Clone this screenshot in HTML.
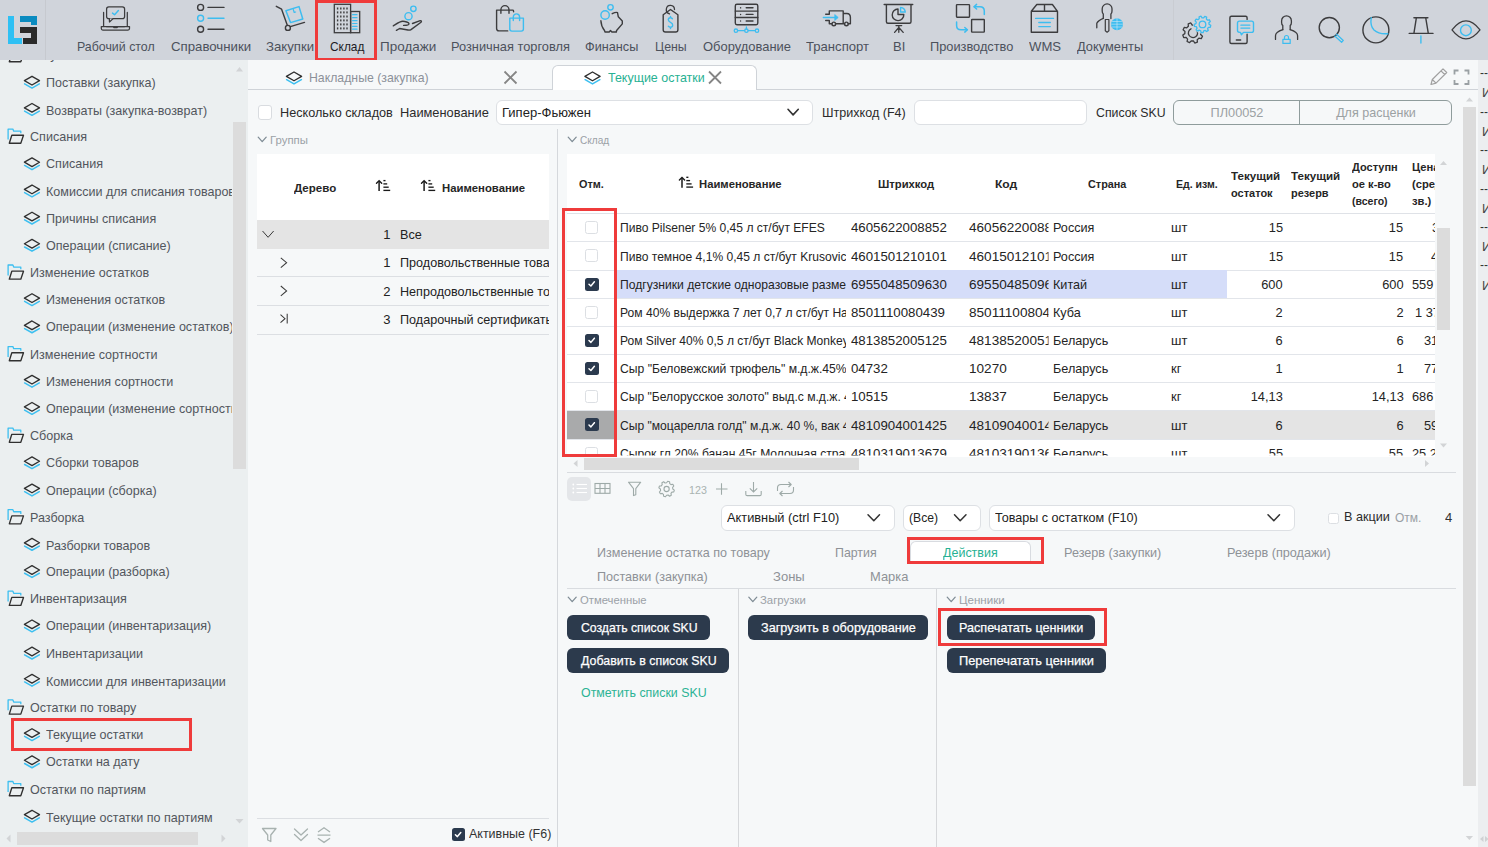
<!DOCTYPE html>
<html><head><meta charset="utf-8"><style>
html,body{margin:0;padding:0;width:1488px;height:847px;overflow:hidden;background:#f6f8f9;font-family:"Liberation Sans",sans-serif;}
.a{position:absolute;box-sizing:border-box;}
.t{position:absolute;white-space:nowrap;}
.clip{position:absolute;overflow:hidden;}
</style></head><body>
<div class="a" style="left:0.00px;top:0.00px;width:1488.00px;height:60.00px;background:#d0d4db"></div>
<div class="a" style="left:45.00px;top:0.00px;width:1.00px;height:60.00px;background:#c6c9cf"></div>
<div class="a" style="left:1173.00px;top:0.00px;width:1.00px;height:60.00px;background:#c9ccd2"></div>
<div class="a" style="left:8.00px;top:16.00px;width:6.00px;height:28.00px;background:#2ec0f4"></div>
<div class="a" style="left:8.00px;top:38.00px;width:14.00px;height:6.00px;background:#2ec0f4"></div>
<div class="a" style="left:19.50px;top:16.00px;width:17.50px;height:6.00px;background:#0a8bc0"></div>
<div class="a" style="left:31.00px;top:16.00px;width:6.00px;height:9.00px;background:#0a8bc0"></div>
<div class="a" style="left:19.50px;top:27.30px;width:17.50px;height:5.50px;background:#2a2a2a"></div>
<div class="a" style="left:31.00px;top:27.30px;width:6.00px;height:16.70px;background:#2a2a2a"></div>
<div class="a" style="left:23.40px;top:38.40px;width:13.60px;height:5.60px;background:#2a2a2a"></div>
<svg class="a" style="left:0;top:0" width="1488" height="60" viewBox="0 0 1488 60" fill="none">
<g stroke-linecap="round" stroke-linejoin="round" stroke-width="1.25">
<!-- desktop -->
<rect x="106.6" y="6.8" width="18" height="11.8" rx="2.2" stroke="#3c3c3e"/>
<path d="M109.3 18.6 L109.5 22 L113.1 18.6" stroke="#3c3c3e" fill="#d0d4db"/>
<path d="M112.5 13.1 L114.6 14.7 L118.4 10.5" stroke="#3dbdf0" stroke-width="1.4"/>
<path d="M103.6 12.4 V26.3 M127.3 12.4 V26.3" stroke="#3c3c3e"/>
<path d="M101.3 26.5 H129.5 V28.5 Q129.5 30 128 30 H102.8 Q101.3 30 101.3 28.5 Z" stroke="#3c3c3e"/>
<path d="M106.5 26.5 H113 L114 27.6 H117 L118 26.5 H124.5" stroke="#3c3c3e"/>
<!-- list -->
<circle cx="200.6" cy="7.4" r="3" stroke="#3c3c3e" stroke-width="1.4"/>
<circle cx="200.6" cy="18.3" r="3" stroke="#3dbdf0" stroke-width="1.4"/>
<circle cx="200.6" cy="29.2" r="3" stroke="#3c3c3e" stroke-width="1.4"/>
<path d="M208 7.4 H224 M208 29.2 H224" stroke="#3c3c3e" stroke-width="1.4"/>
<path d="M208 18.3 H224" stroke="#3dbdf0" stroke-width="1.4"/>
<!-- cart -->
<path d="M276.3 6.3 L281.6 9.2 L287.3 25.2" stroke="#3c3c3e" stroke-width="1.4"/>
<circle cx="287.9" cy="27.9" r="2.5" stroke="#3c3c3e" stroke-width="1.4"/>
<path d="M290.3 26.6 L304.5 22.4" stroke="#3c3c3e" stroke-width="1.4"/>
<path d="M285.9 10.8 L299 6.6 L302.8 19 L290.5 22.6 Z" stroke="#3dbdf0" stroke-width="1.5"/>
<path d="M293.3 9.5 L294.2 12.5 L295.6 12" stroke="#3dbdf0" stroke-width="1.2"/>
<!-- building -->
<rect x="334.3" y="4.3" width="16.3" height="28.4" stroke="#3c3c3e" stroke-width="1.3" stroke-linejoin="miter"/>
<rect x="350.6" y="11.5" width="9.1" height="21.2" stroke="#3c3c3e" stroke-width="1.3" stroke-linejoin="miter"/>
<rect x="336.9" y="7.5" width="1.4" height="2" fill="#3c3c3e" stroke="none"/><rect x="336.9" y="11.4" width="1.4" height="2" fill="#3c3c3e" stroke="none"/><rect x="336.9" y="15.5" width="1.4" height="2" fill="#3c3c3e" stroke="none"/><rect x="336.9" y="19.4" width="1.4" height="2" fill="#3c3c3e" stroke="none"/><rect x="336.9" y="23.4" width="1.4" height="2" fill="#3c3c3e" stroke="none"/><rect x="336.9" y="27.4" width="1.4" height="2" fill="#3c3c3e" stroke="none"/><rect x="340.1" y="7.5" width="1.4" height="2" fill="#3c3c3e" stroke="none"/><rect x="340.1" y="11.4" width="1.4" height="2" fill="#3c3c3e" stroke="none"/><rect x="340.1" y="15.5" width="1.4" height="2" fill="#3c3c3e" stroke="none"/><rect x="340.1" y="19.4" width="1.4" height="2" fill="#3c3c3e" stroke="none"/><rect x="340.1" y="23.4" width="1.4" height="2" fill="#3c3c3e" stroke="none"/><rect x="340.1" y="27.4" width="1.4" height="2" fill="#3c3c3e" stroke="none"/><rect x="343.2" y="7.5" width="1.4" height="2" fill="#3c3c3e" stroke="none"/><rect x="343.2" y="11.4" width="1.4" height="2" fill="#3c3c3e" stroke="none"/><rect x="343.2" y="15.5" width="1.4" height="2" fill="#3c3c3e" stroke="none"/><rect x="343.2" y="19.4" width="1.4" height="2" fill="#3c3c3e" stroke="none"/><rect x="343.2" y="23.4" width="1.4" height="2" fill="#3c3c3e" stroke="none"/><rect x="343.2" y="27.4" width="1.4" height="2" fill="#3c3c3e" stroke="none"/><rect x="346.3" y="7.5" width="1.4" height="2" fill="#3c3c3e" stroke="none"/><rect x="346.3" y="11.4" width="1.4" height="2" fill="#3c3c3e" stroke="none"/><rect x="346.3" y="15.5" width="1.4" height="2" fill="#3c3c3e" stroke="none"/><rect x="346.3" y="19.4" width="1.4" height="2" fill="#3c3c3e" stroke="none"/><rect x="346.3" y="23.4" width="1.4" height="2" fill="#3c3c3e" stroke="none"/><rect x="346.3" y="27.4" width="1.4" height="2" fill="#3c3c3e" stroke="none"/><path d="M352.6 14.7 H357" stroke="#3dbdf0" stroke-width="1.2"/><path d="M352.6 17.7 H357" stroke="#3dbdf0" stroke-width="1.2"/><path d="M352.6 20.6 H357" stroke="#3dbdf0" stroke-width="1.2"/><path d="M352.6 23.5 H357" stroke="#3dbdf0" stroke-width="1.2"/><path d="M352.6 26.4 H357" stroke="#3dbdf0" stroke-width="1.2"/><path d="M352.6 29.2 H357" stroke="#3dbdf0" stroke-width="1.2"/>
<!-- hand -->
<circle cx="408.5" cy="16.2" r="3.6" stroke="#3dbdf0" stroke-width="1.4"/>
<circle cx="413.4" cy="8.8" r="2.7" stroke="#3dbdf0" stroke-width="1.4"/>
<path d="M393.3 25.8 C397 23.5 400 21.3 402.8 21.3 C405 21.3 409 22.3 409 23.8 C409 25 406 25.4 403.6 25.4" stroke="#3c3c3e" stroke-width="1.4"/>
<path d="M412.5 23.5 L420.2 20.7 C421.4 20.5 421.8 21.3 421 22.2 L411 29.6 C410 30.2 409 30.2 408 30 L399.6 28.5 L396.4 30.3" stroke="#3c3c3e" stroke-width="1.4"/>
<!-- bags -->
<path d="M507.7 30.9 H499 Q496.6 30.9 496.6 28.5 V10.1 H513 Q513.6 10.1 513.6 11.8" stroke="#3c3c3e" stroke-width="1.4"/>
<path d="M500.9 13.3 V9.9 A4.05 4.3 0 0 1 509 9.9 V13.3" stroke="#3c3c3e" stroke-width="1.4"/>
<path d="M509.8 18.1 H523.4 V29 Q523.4 31.1 521.3 31.1 H511.9 Q509.8 31.1 509.8 29 Z" stroke="#3dbdf0" stroke-width="1.4"/>
<path d="M513.3 20.5 V17.1 A3.15 3.2 0 0 1 519.6 17.1 V20.5" stroke="#3dbdf0" stroke-width="1.4"/>
<!-- piggy -->
<circle cx="605.1" cy="15" r="4.2" stroke="#3dbdf0" stroke-width="1.4"/>
<circle cx="610.5" cy="7.3" r="2.7" stroke="#3dbdf0" stroke-width="1.4"/>
<path d="M600.9 20.8 C601 25 602.5 28 604.5 30.5 L605 32 H609.2 L610.5 30.6 L611.9 32 H616.3 L616.6 30.5 L622.3 23.9 V21 L618.3 16.8 L617.5 12.6 C616.5 12 615 12.3 612.2 13.7" stroke="#3c3c3e" stroke-width="1.4"/>
<!-- tag -->
<path d="M670.5 9.5 L677.9 14.8 V29.8 Q677.9 32 675.7 32 H665.4 Q663.2 32 663.2 29.8 V14.8 Z" stroke="#3c3c3e" stroke-width="1.4"/>
<path d="M674.5 9.5 A4.1 4.3 0 1 0 669.5 13.8" stroke="#3c3c3e" stroke-width="1.3"/>
<path d="M672.4 18.7 Q671.5 17.6 670.3 17.7 Q668.3 17.9 668.3 19.8 Q668.4 21.5 670.5 22.3 Q672.8 23.2 672.7 25.2 Q672.5 27.2 670.4 27.2 Q669 27.2 668.3 26.2 M670.5 16.5 V17.7 M670.5 27.2 V28.5" stroke="#3dbdf0" stroke-width="1.4"/>
<!-- server -->
<rect x="735.3" y="4.3" width="22.5" height="20.4" rx="1.6" stroke="#3c3c3e" stroke-width="1.4"/>
<path d="M735.3 11.1 H757.8 M735.3 17.5 H757.8" stroke="#3c3c3e" stroke-width="1.4"/>
<path d="M740.6 7.8 V7.9 M740.6 14.4 V14.5 M740.6 21 V21.1" stroke="#3c3c3e" stroke-width="1.4"/>
<path d="M746.2 7.8 H753 M746.2 14.4 H753 M746.2 21 H753" stroke="#3c3c3e" stroke-width="1.4"/>
<path d="M737.7 30.7 H744.6 M748.2 30.7 H755.2 M746.4 27 V28.9" stroke="#3dbdf0" stroke-width="1.3"/>
<circle cx="735.9" cy="30.7" r="1.7" stroke="#3dbdf0" stroke-width="1.3"/>
<circle cx="746.4" cy="30.7" r="1.7" stroke="#3dbdf0" stroke-width="1.3"/>
<circle cx="757" cy="30.7" r="1.7" stroke="#3dbdf0" stroke-width="1.3"/>
<!-- truck -->
<path d="M825.7 14.3 H829.3 V10.9 H843.2 V23.7 M825.7 20.5 H829.3 V23.7 H832 M835.6 23.7 H844.6 M848.2 23.7 H850.4 V17.6 Q850.4 13.5 846.8 13.5 H843.2" stroke="#3c3c3e" stroke-width="1.4"/>
<circle cx="833.8" cy="23.9" r="1.8" stroke="#3c3c3e" stroke-width="1.4"/>
<circle cx="846.4" cy="23.9" r="1.8" stroke="#3c3c3e" stroke-width="1.4"/>
<path d="M823.4 17.5 H836" stroke="#3dbdf0" stroke-width="1.6"/>
<path d="M835 14.8 L838.2 17.5 L835 20.2 Z" fill="#3dbdf0" stroke="#3dbdf0" stroke-width="0.8"/>
<!-- BI -->
<path d="M884.2 4.6 H912.7" stroke="#3c3c3e" stroke-width="1.5"/>
<path d="M886.4 4.6 V21.8 Q886.4 23.3 887.9 23.3 H909.5 Q911 23.3 911 21.8 V4.6" stroke="#3c3c3e" stroke-width="1.4"/>
<path d="M898 9 A5.8 5.8 0 1 0 903.8 14.5 H898 Z" stroke="#3c3c3e" stroke-width="1.4"/>
<path d="M900.6 7.4 A5.3 5.3 0 0 1 905.3 12 H900.6 Z" stroke="#3dbdf0" stroke-width="1.4"/>
<path d="M896 25.6 H901.7 M898.8 25.6 V32.3 M898.8 27.5 L894.6 32.4 M898.8 27.5 L903.2 32.4" stroke="#3c3c3e" stroke-width="1.3"/>
<!-- production -->
<rect x="956.5" y="4.6" width="13" height="12.6" rx="0.6" stroke="#3c3c3e" stroke-width="1.4"/>
<rect x="971.6" y="19.5" width="12.7" height="12.6" rx="0.6" stroke="#3c3c3e" stroke-width="1.4"/>
<path d="M984.3 14.4 V11 Q984.3 6.7 980 6.7 H974.3" stroke="#3dbdf0" stroke-width="1.5"/>
<path d="M976.6 4.4 L974 6.7 L976.6 9" stroke="#3dbdf0" stroke-width="1.5"/>
<path d="M956.6 22.1 V25.5 Q956.6 29.8 960.9 29.8 H967" stroke="#3dbdf0" stroke-width="1.5"/>
<path d="M964.8 27.5 L967.4 29.8 L964.8 32.1" stroke="#3dbdf0" stroke-width="1.5"/>
<!-- WMS -->
<path d="M1031.3 11.3 V32.2 H1057.5 V11.3 Z M1031.3 11.3 L1036.8 4.5 H1052.4 L1057.5 11.3 M1044.5 4.5 V11.3" stroke="#3c3c3e" stroke-width="1.4"/>
<path d="M1035.6 18.4 H1053.5 M1038.8 22.5 H1050.3 M1038.8 26.6 H1050.3" stroke="#3dbdf0" stroke-width="1.4"/>
<!-- documents -->
<path d="M1103.3 18.3 V14 Q1102.2 13.2 1102.2 11 V8.8 A4.9 4.9 0 0 1 1112 8.8 V11 Q1112 13.2 1110.9 14 V18.5" stroke="#3c3c3e" stroke-width="1.3"/>
<path d="M1103.3 18.3 Q1098 20.5 1096.8 23.3 V27.8" stroke="#3c3c3e" stroke-width="1.3"/>
<path d="M1105.3 19.5 H1108.9 V30.8 L1107.1 32.2 L1105.3 30.8 Z" stroke="#3c3c3e" stroke-width="1.2"/>
<circle cx="1117" cy="24.2" r="6" fill="#3dbdf0" stroke="none"/>
<path d="M1111.5 24.2 H1122.5 M1117 18.5 V30 M1112.5 21.5 H1121.5 M1112.5 27 H1121.5" stroke="#d0e8f5" stroke-width="0.6"/>
<!-- right: gears -->
<polygon points="1200.64,34.59 1202.49,36.19 1201.26,38.70 1198.86,38.22 1197.22,39.67 1197.40,42.11 1194.75,43.01 1193.40,40.98 1191.21,40.84 1189.61,42.69 1187.10,41.46 1187.58,39.06 1186.13,37.42 1183.69,37.60 1182.79,34.95 1184.82,33.60 1184.96,31.41 1183.11,29.81 1184.34,27.30 1186.74,27.78 1188.38,26.33 1188.20,23.89 1190.85,22.99 1192.20,25.02 1194.39,25.16 1195.99,23.31 1198.50,24.54 1198.02,26.94 1199.47,28.58 1201.91,28.40 1202.81,31.05 1200.78,32.40" stroke="#3c3c3e" stroke-width="1.3"/><path d="M1196.5 30 A4.6 4.6 0 1 1 1191 28.8" stroke="#3c3c3e" stroke-width="1.3"/><circle cx="1202.5" cy="24.4" r="9.5" fill="#d0d4db" stroke="none"/><polygon points="1209.10,24.40 1210.75,25.27 1210.30,27.24 1208.43,27.29 1207.56,28.64 1208.27,30.37 1206.65,31.59 1205.18,30.43 1203.65,30.90 1203.08,32.68 1201.06,32.57 1200.68,30.74 1199.20,30.12 1197.62,31.11 1196.14,29.74 1197.03,28.09 1196.30,26.66 1194.45,26.41 1194.20,24.40 1195.94,23.71 1196.30,22.14 1195.04,20.76 1196.14,19.06 1197.92,19.65 1199.20,18.68 1199.12,16.82 1201.06,16.23 1202.04,17.82 1203.65,17.90 1204.79,16.42 1206.65,17.21 1206.38,19.06 1207.56,20.16 1209.38,19.76 1210.30,21.56 1208.90,22.80" stroke="#3dbdf0" stroke-width="1.3" fill="#d0d4db"/><circle cx="1202.5" cy="24.4" r="3.3" stroke="#3dbdf0" stroke-width="1.3"/>
<!-- phone -->
<path d="M1247.1 19.4 V17.8 Q1247.1 16.3 1245.6 16.3 H1231.4 Q1229.9 16.3 1229.9 17.8 V42 Q1229.9 43.5 1231.4 43.5 H1245.6 Q1247.1 43.5 1247.1 42 V34.2" stroke="#3c3c3e" stroke-width="1.4"/>
<path d="M1236.4 40 H1240.6" stroke="#3c3c3e" stroke-width="1.5"/>
<path d="M1239.5 21.1 H1251.5 Q1253.5 21.1 1253.5 23.1 V30.4 Q1253.5 32.4 1251.5 32.4 H1243.5 L1241.4 34.8 L1240.5 32.4 Q1237.5 32.4 1237.5 30.4 V23.1 Q1237.5 21.1 1239.5 21.1 Z" stroke="#3dbdf0" stroke-width="1.4" fill="#d0d4db"/>
<path d="M1240.9 25.2 H1249.8 M1240.9 28.1 H1249.8" stroke="#3dbdf0" stroke-width="1.3"/>
<!-- user -->
<path d="M1282.8 29.7 V25.6 Q1281.6 24.6 1281.6 22.5 V20.9 A4.9 5.1 0 0 1 1291.4 20.9 V22.5 Q1291.4 24.6 1290.2 25.6 V29.7" stroke="#3c3c3e" stroke-width="1.3"/>
<path d="M1282.8 29.7 Q1275.5 32 1275.5 35.7 V39.4 M1290.2 29.7 Q1297.6 32 1297.6 35.7 V39.4" stroke="#3c3c3e" stroke-width="1.3"/>
<rect x="1282.9" y="39.3" width="7.3" height="4.1" stroke="#3dbdf0" stroke-width="1.2"/>
<path d="M1284.5 39.3 V37.5 A2 2 0 0 1 1288.5 37.5 V39.3" stroke="#3dbdf0" stroke-width="1.2"/>
<!-- search -->
<circle cx="1329.3" cy="27.6" r="10.1" stroke="#3c3c3e" stroke-width="1.4"/>
<path d="M1336.6 34.3 L1343.3 40.4 L1341.6 42.2 L1334.8 36" stroke="#3dbdf0" stroke-width="1.3"/>
<!-- moon -->
<circle cx="1375.9" cy="29.9" r="13" stroke="#3c3c3e" stroke-width="1.4"/>
<path d="M1371.2 17.6 Q1370 26 1374 30 Q1379 34.5 1387.8 33.7" stroke="#3dbdf0" stroke-width="1.4"/>
<!-- pin -->
<path d="M1413.9 17.7 H1427.9 M1416.4 17.7 L1413.9 33.4 M1425.7 17.7 L1428.3 33.4 M1409.2 33.4 H1433" stroke="#3c3c3e" stroke-width="1.4"/>
<path d="M1420.9 36 V43" stroke="#3dbdf0" stroke-width="1.4"/>
<!-- eye -->
<path d="M1452 29.9 Q1466 12 1480 29.9 Q1466 48 1452 29.9 Z" stroke="#3c3c3e" stroke-width="1.3"/>
<circle cx="1465.9" cy="30.3" r="5.4" stroke="#3dbdf0" stroke-width="1.4"/>
</g>
</svg>
<span id="t1" class="t" style="left:77.00px;top:38.82px;font-size:13.5px;line-height:16.20px;color:#4c515b;font-weight:normal;transform:scaleX(0.9165);transform-origin:0 0;">Рабочий стол</span>
<span id="t2" class="t" style="left:171.00px;top:38.82px;font-size:13.5px;line-height:16.20px;color:#4c515b;font-weight:normal;transform:scaleX(0.9794);transform-origin:0 0;">Справочники</span>
<span id="t3" class="t" style="left:266.00px;top:38.82px;font-size:13.5px;line-height:16.20px;color:#4c515b;font-weight:normal;transform:scaleX(0.9772);transform-origin:0 0;">Закупки</span>
<span id="t4" class="t" style="left:330.00px;top:38.82px;font-size:13.5px;line-height:16.20px;color:#1b1b24;font-weight:normal;transform:scaleX(0.8788);transform-origin:0 0;">Склад</span>
<span id="t5" class="t" style="left:380.00px;top:38.82px;font-size:13.5px;line-height:16.20px;color:#4c515b;font-weight:normal;transform:scaleX(0.9981);transform-origin:0 0;">Продажи</span>
<span id="t6" class="t" style="left:451.00px;top:38.82px;font-size:13.5px;line-height:16.20px;color:#4c515b;font-weight:normal;transform:scaleX(0.9494);transform-origin:0 0;">Розничная торговля</span>
<span id="t7" class="t" style="left:585.00px;top:38.82px;font-size:13.5px;line-height:16.20px;color:#4c515b;font-weight:normal;transform:scaleX(0.9407);transform-origin:0 0;">Финансы</span>
<span id="t8" class="t" style="left:654.90px;top:38.82px;font-size:13.5px;line-height:16.20px;color:#4c515b;font-weight:normal;transform:scaleX(0.9139);transform-origin:0 0;">Цены</span>
<span id="t9" class="t" style="left:703.00px;top:38.82px;font-size:13.5px;line-height:16.20px;color:#4c515b;font-weight:normal;transform:scaleX(0.9580);transform-origin:0 0;">Оборудование</span>
<span id="t10" class="t" style="left:806.00px;top:38.82px;font-size:13.5px;line-height:16.20px;color:#4c515b;font-weight:normal;transform:scaleX(0.9711);transform-origin:0 0;">Транспорт</span>
<span id="t11" class="t" style="left:892.60px;top:38.82px;font-size:13.5px;line-height:16.20px;color:#4c515b;font-weight:normal;transform:scaleX(0.9633);transform-origin:0 0;">BI</span>
<span id="t12" class="t" style="left:929.50px;top:38.82px;font-size:13.5px;line-height:16.20px;color:#4c515b;font-weight:normal;transform:scaleX(0.9473);transform-origin:0 0;">Производство</span>
<span id="t13" class="t" style="left:1029.00px;top:38.82px;font-size:13.5px;line-height:16.20px;color:#4c515b;font-weight:normal;transform:scaleX(0.9730);transform-origin:0 0;">WMS</span>
<span id="t14" class="t" style="left:1076.70px;top:38.82px;font-size:13.5px;line-height:16.20px;color:#4c515b;font-weight:normal;transform:scaleX(0.9515);transform-origin:0 0;">Документы</span>
<div class="a" style="left:315.00px;top:0.00px;width:62.00px;height:61.00px;border:3px solid #ef3b3b"></div>
<div class="a" style="left:0.00px;top:60.00px;width:248.00px;height:787.00px;background:#ebeff0"></div>
<div class="a" style="left:0;top:0;width:1488px;height:847px;clip-path:inset(60.00px 1256.00px 17.00px 0.00px)">
<span id="t15" class="t" style="left:29.80px;top:47.22px;font-size:13.5px;line-height:16.20px;color:#52565d;font-weight:normal;transform:scaleX(0.9289);transform-origin:0 0;">Закупки</span>
<span id="t16" class="t" style="left:45.90px;top:75.32px;font-size:13.5px;line-height:16.20px;color:#52565d;font-weight:normal;transform:scaleX(0.9265);transform-origin:0 0;">Поставки (закупка)</span>
<span id="t17" class="t" style="left:45.90px;top:102.52px;font-size:13.5px;line-height:16.20px;color:#52565d;font-weight:normal;transform:scaleX(0.9271);transform-origin:0 0;">Возвраты (закупка-возврат)</span>
<span id="t18" class="t" style="left:29.80px;top:128.82px;font-size:13.5px;line-height:16.20px;color:#52565d;font-weight:normal;transform:scaleX(0.9315);transform-origin:0 0;">Списания</span>
<span id="t19" class="t" style="left:45.90px;top:156.02px;font-size:13.5px;line-height:16.20px;color:#52565d;font-weight:normal;transform:scaleX(0.9315);transform-origin:0 0;">Списания</span>
<span id="t20" class="t" style="left:45.90px;top:183.62px;font-size:13.5px;line-height:16.20px;color:#52565d;font-weight:normal;transform:scaleX(0.9288);transform-origin:0 0;">Комиссии для списания товаров</span>
<span id="t21" class="t" style="left:45.90px;top:211.22px;font-size:13.5px;line-height:16.20px;color:#52565d;font-weight:normal;transform:scaleX(0.9306);transform-origin:0 0;">Причины списания</span>
<span id="t22" class="t" style="left:45.90px;top:238.42px;font-size:13.5px;line-height:16.20px;color:#52565d;font-weight:normal;transform:scaleX(0.9290);transform-origin:0 0;">Операции (списание)</span>
<span id="t23" class="t" style="left:29.80px;top:264.72px;font-size:13.5px;line-height:16.20px;color:#52565d;font-weight:normal;transform:scaleX(0.9293);transform-origin:0 0;">Изменение остатков</span>
<span id="t24" class="t" style="left:45.90px;top:292.42px;font-size:13.5px;line-height:16.20px;color:#52565d;font-weight:normal;transform:scaleX(0.9293);transform-origin:0 0;">Изменения остатков</span>
<span id="t25" class="t" style="left:45.90px;top:319.12px;font-size:13.5px;line-height:16.20px;color:#52565d;font-weight:normal;transform:scaleX(0.9285);transform-origin:0 0;">Операции (изменение остатков)</span>
<span id="t26" class="t" style="left:29.80px;top:346.82px;font-size:13.5px;line-height:16.20px;color:#52565d;font-weight:normal;transform:scaleX(0.9297);transform-origin:0 0;">Изменение сортности</span>
<span id="t27" class="t" style="left:45.90px;top:374.42px;font-size:13.5px;line-height:16.20px;color:#52565d;font-weight:normal;transform:scaleX(0.9297);transform-origin:0 0;">Изменения сортности</span>
<span id="t28" class="t" style="left:45.90px;top:400.82px;font-size:13.5px;line-height:16.20px;color:#52565d;font-weight:normal;transform:scaleX(0.9289);transform-origin:0 0;">Операции (изменение сортности)</span>
<span id="t29" class="t" style="left:29.80px;top:427.82px;font-size:13.5px;line-height:16.20px;color:#52565d;font-weight:normal;transform:scaleX(0.9317);transform-origin:0 0;">Сборка</span>
<span id="t30" class="t" style="left:45.90px;top:455.02px;font-size:13.5px;line-height:16.20px;color:#52565d;font-weight:normal;transform:scaleX(0.9293);transform-origin:0 0;">Сборки товаров</span>
<span id="t31" class="t" style="left:45.90px;top:482.72px;font-size:13.5px;line-height:16.20px;color:#52565d;font-weight:normal;transform:scaleX(0.9288);transform-origin:0 0;">Операции (сборка)</span>
<span id="t32" class="t" style="left:29.80px;top:510.42px;font-size:13.5px;line-height:16.20px;color:#52565d;font-weight:normal;transform:scaleX(0.9299);transform-origin:0 0;">Разборка</span>
<span id="t33" class="t" style="left:45.90px;top:537.62px;font-size:13.5px;line-height:16.20px;color:#52565d;font-weight:normal;transform:scaleX(0.9288);transform-origin:0 0;">Разборки товаров</span>
<span id="t34" class="t" style="left:45.90px;top:563.72px;font-size:13.5px;line-height:16.20px;color:#52565d;font-weight:normal;transform:scaleX(0.9287);transform-origin:0 0;">Операции (разборка)</span>
<span id="t35" class="t" style="left:29.80px;top:590.92px;font-size:13.5px;line-height:16.20px;color:#52565d;font-weight:normal;transform:scaleX(0.9307);transform-origin:0 0;">Инвентаризация</span>
<span id="t36" class="t" style="left:45.90px;top:618.12px;font-size:13.5px;line-height:16.20px;color:#52565d;font-weight:normal;transform:scaleX(0.9292);transform-origin:0 0;">Операции (инвентаризация)</span>
<span id="t37" class="t" style="left:45.90px;top:646.32px;font-size:13.5px;line-height:16.20px;color:#52565d;font-weight:normal;transform:scaleX(0.9308);transform-origin:0 0;">Инвентаризации</span>
<span id="t38" class="t" style="left:45.90px;top:673.52px;font-size:13.5px;line-height:16.20px;color:#52565d;font-weight:normal;transform:scaleX(0.9294);transform-origin:0 0;">Комиссии для инвентаризации</span>
<span id="t39" class="t" style="left:29.80px;top:699.82px;font-size:13.5px;line-height:16.20px;color:#52565d;font-weight:normal;transform:scaleX(0.9273);transform-origin:0 0;">Остатки по товару</span>
<span id="t40" class="t" style="left:45.90px;top:727.02px;font-size:13.5px;line-height:16.20px;color:#52565d;font-weight:normal;transform:scaleX(0.9288);transform-origin:0 0;">Текущие остатки</span>
<span id="t41" class="t" style="left:45.90px;top:754.22px;font-size:13.5px;line-height:16.20px;color:#52565d;font-weight:normal;transform:scaleX(0.9273);transform-origin:0 0;">Остатки на дату</span>
<span id="t42" class="t" style="left:29.80px;top:782.42px;font-size:13.5px;line-height:16.20px;color:#52565d;font-weight:normal;transform:scaleX(0.9284);transform-origin:0 0;">Остатки по партиям</span>
<span id="t43" class="t" style="left:45.90px;top:809.62px;font-size:13.5px;line-height:16.20px;color:#52565d;font-weight:normal;transform:scaleX(0.9282);transform-origin:0 0;">Текущие остатки по партиям</span>
<svg class="a" style="left:0;top:0" width="248" height="847" viewBox="0 0 248 847" fill="none"><path d="M8.1 57.91 V47.52 H12.9 L13.7 49.61 H20.8 V51.81" stroke="#3cbff0" stroke-width="1.3" stroke-linejoin="round"/><path d="M11.8 53.71 H23.5 L20.8 61.71 H9.3 Z" stroke="#303030" stroke-width="1.35" stroke-linejoin="round" fill="#ebeff0"/><path d="M24.4 80.65 L32 76.30 L39.5 80.65 L32 85.00 Z" stroke="#303030" stroke-width="1.35" stroke-linejoin="round"/><path d="M24.6 83.90 L32 88.10 L39.3 83.90" stroke="#3cbff0" stroke-width="1.5" stroke-linejoin="round" stroke-linecap="round"/><path d="M24.4 107.84 L32 103.48 L39.5 107.84 L32 112.19 Z" stroke="#303030" stroke-width="1.35" stroke-linejoin="round"/><path d="M24.6 111.09 L32 115.28 L39.3 111.09" stroke="#3cbff0" stroke-width="1.5" stroke-linejoin="round" stroke-linecap="round"/><path d="M8.1 139.47 V129.07 H12.9 L13.7 131.17 H20.8 V133.37" stroke="#3cbff0" stroke-width="1.3" stroke-linejoin="round"/><path d="M11.8 135.27 H23.5 L20.8 143.27 H9.3 Z" stroke="#303030" stroke-width="1.35" stroke-linejoin="round" fill="#ebeff0"/><path d="M24.4 162.21 L32 157.86 L39.5 162.21 L32 166.56 Z" stroke="#303030" stroke-width="1.35" stroke-linejoin="round"/><path d="M24.6 165.46 L32 169.66 L39.3 165.46" stroke="#3cbff0" stroke-width="1.5" stroke-linejoin="round" stroke-linecap="round"/><path d="M24.4 189.39 L32 185.04 L39.5 189.39 L32 193.74 Z" stroke="#303030" stroke-width="1.35" stroke-linejoin="round"/><path d="M24.6 192.64 L32 196.84 L39.3 192.64" stroke="#3cbff0" stroke-width="1.5" stroke-linejoin="round" stroke-linecap="round"/><path d="M24.4 216.57 L32 212.22 L39.5 216.57 L32 220.92 Z" stroke="#303030" stroke-width="1.35" stroke-linejoin="round"/><path d="M24.6 219.82 L32 224.02 L39.3 219.82" stroke="#3cbff0" stroke-width="1.5" stroke-linejoin="round" stroke-linecap="round"/><path d="M24.4 243.76 L32 239.41 L39.5 243.76 L32 248.11 Z" stroke="#303030" stroke-width="1.35" stroke-linejoin="round"/><path d="M24.6 247.01 L32 251.21 L39.3 247.01" stroke="#3cbff0" stroke-width="1.5" stroke-linejoin="round" stroke-linecap="round"/><path d="M8.1 275.39 V264.99 H12.9 L13.7 267.09 H20.8 V269.29" stroke="#3cbff0" stroke-width="1.3" stroke-linejoin="round"/><path d="M11.8 271.19 H23.5 L20.8 279.19 H9.3 Z" stroke="#303030" stroke-width="1.35" stroke-linejoin="round" fill="#ebeff0"/><path d="M24.4 298.13 L32 293.78 L39.5 298.13 L32 302.48 Z" stroke="#303030" stroke-width="1.35" stroke-linejoin="round"/><path d="M24.6 301.38 L32 305.58 L39.3 301.38" stroke="#3cbff0" stroke-width="1.5" stroke-linejoin="round" stroke-linecap="round"/><path d="M24.4 325.31 L32 320.96 L39.5 325.31 L32 329.66 Z" stroke="#303030" stroke-width="1.35" stroke-linejoin="round"/><path d="M24.6 328.56 L32 332.76 L39.3 328.56" stroke="#3cbff0" stroke-width="1.5" stroke-linejoin="round" stroke-linecap="round"/><path d="M8.1 356.95 V346.55 H12.9 L13.7 348.65 H20.8 V350.85" stroke="#3cbff0" stroke-width="1.3" stroke-linejoin="round"/><path d="M11.8 352.75 H23.5 L20.8 360.75 H9.3 Z" stroke="#303030" stroke-width="1.35" stroke-linejoin="round" fill="#ebeff0"/><path d="M24.4 379.68 L32 375.33 L39.5 379.68 L32 384.03 Z" stroke="#303030" stroke-width="1.35" stroke-linejoin="round"/><path d="M24.6 382.93 L32 387.13 L39.3 382.93" stroke="#3cbff0" stroke-width="1.5" stroke-linejoin="round" stroke-linecap="round"/><path d="M24.4 406.87 L32 402.52 L39.5 406.87 L32 411.22 Z" stroke="#303030" stroke-width="1.35" stroke-linejoin="round"/><path d="M24.6 410.12 L32 414.32 L39.3 410.12" stroke="#3cbff0" stroke-width="1.5" stroke-linejoin="round" stroke-linecap="round"/><path d="M8.1 438.50 V428.10 H12.9 L13.7 430.20 H20.8 V432.40" stroke="#3cbff0" stroke-width="1.3" stroke-linejoin="round"/><path d="M11.8 434.30 H23.5 L20.8 442.30 H9.3 Z" stroke="#303030" stroke-width="1.35" stroke-linejoin="round" fill="#ebeff0"/><path d="M24.4 461.24 L32 456.89 L39.5 461.24 L32 465.59 Z" stroke="#303030" stroke-width="1.35" stroke-linejoin="round"/><path d="M24.6 464.49 L32 468.69 L39.3 464.49" stroke="#3cbff0" stroke-width="1.5" stroke-linejoin="round" stroke-linecap="round"/><path d="M24.4 488.42 L32 484.07 L39.5 488.42 L32 492.77 Z" stroke="#303030" stroke-width="1.35" stroke-linejoin="round"/><path d="M24.6 491.67 L32 495.88 L39.3 491.67" stroke="#3cbff0" stroke-width="1.5" stroke-linejoin="round" stroke-linecap="round"/><path d="M8.1 520.06 V509.66 H12.9 L13.7 511.76 H20.8 V513.96" stroke="#3cbff0" stroke-width="1.3" stroke-linejoin="round"/><path d="M11.8 515.86 H23.5 L20.8 523.86 H9.3 Z" stroke="#303030" stroke-width="1.35" stroke-linejoin="round" fill="#ebeff0"/><path d="M24.4 542.79 L32 538.44 L39.5 542.79 L32 547.14 Z" stroke="#303030" stroke-width="1.35" stroke-linejoin="round"/><path d="M24.6 546.04 L32 550.25 L39.3 546.04" stroke="#3cbff0" stroke-width="1.5" stroke-linejoin="round" stroke-linecap="round"/><path d="M24.4 569.98 L32 565.63 L39.5 569.98 L32 574.33 Z" stroke="#303030" stroke-width="1.35" stroke-linejoin="round"/><path d="M24.6 573.23 L32 577.43 L39.3 573.23" stroke="#3cbff0" stroke-width="1.5" stroke-linejoin="round" stroke-linecap="round"/><path d="M8.1 601.62 V591.22 H12.9 L13.7 593.31 H20.8 V595.51" stroke="#3cbff0" stroke-width="1.3" stroke-linejoin="round"/><path d="M11.8 597.41 H23.5 L20.8 605.41 H9.3 Z" stroke="#303030" stroke-width="1.35" stroke-linejoin="round" fill="#ebeff0"/><path d="M24.4 624.35 L32 620.00 L39.5 624.35 L32 628.70 Z" stroke="#303030" stroke-width="1.35" stroke-linejoin="round"/><path d="M24.6 627.60 L32 631.80 L39.3 627.60" stroke="#3cbff0" stroke-width="1.5" stroke-linejoin="round" stroke-linecap="round"/><path d="M24.4 651.53 L32 647.18 L39.5 651.53 L32 655.88 Z" stroke="#303030" stroke-width="1.35" stroke-linejoin="round"/><path d="M24.6 654.78 L32 658.99 L39.3 654.78" stroke="#3cbff0" stroke-width="1.5" stroke-linejoin="round" stroke-linecap="round"/><path d="M24.4 678.72 L32 674.37 L39.5 678.72 L32 683.07 Z" stroke="#303030" stroke-width="1.35" stroke-linejoin="round"/><path d="M24.6 681.97 L32 686.17 L39.3 681.97" stroke="#3cbff0" stroke-width="1.5" stroke-linejoin="round" stroke-linecap="round"/><path d="M8.1 710.36 V699.96 H12.9 L13.7 702.05 H20.8 V704.25" stroke="#3cbff0" stroke-width="1.3" stroke-linejoin="round"/><path d="M11.8 706.15 H23.5 L20.8 714.15 H9.3 Z" stroke="#303030" stroke-width="1.35" stroke-linejoin="round" fill="#ebeff0"/><path d="M24.4 733.09 L32 728.74 L39.5 733.09 L32 737.44 Z" stroke="#303030" stroke-width="1.35" stroke-linejoin="round"/><path d="M24.6 736.34 L32 740.54 L39.3 736.34" stroke="#3cbff0" stroke-width="1.5" stroke-linejoin="round" stroke-linecap="round"/><path d="M24.4 760.27 L32 755.92 L39.5 760.27 L32 764.62 Z" stroke="#303030" stroke-width="1.35" stroke-linejoin="round"/><path d="M24.6 763.52 L32 767.73 L39.3 763.52" stroke="#3cbff0" stroke-width="1.5" stroke-linejoin="round" stroke-linecap="round"/><path d="M8.1 791.91 V781.51 H12.9 L13.7 783.61 H20.8 V785.81" stroke="#3cbff0" stroke-width="1.3" stroke-linejoin="round"/><path d="M11.8 787.71 H23.5 L20.8 795.71 H9.3 Z" stroke="#303030" stroke-width="1.35" stroke-linejoin="round" fill="#ebeff0"/><path d="M24.4 814.64 L32 810.29 L39.5 814.64 L32 819.00 Z" stroke="#303030" stroke-width="1.35" stroke-linejoin="round"/><path d="M24.6 817.89 L32 822.10 L39.3 817.89" stroke="#3cbff0" stroke-width="1.5" stroke-linejoin="round" stroke-linecap="round"/></svg>
</div>
<div class="a" style="left:233.00px;top:122.00px;width:13.00px;height:347.00px;background:#dcdcdc"></div>
<svg class="a" style="left:0;top:0" width="248" height="847" viewBox="0 0 248 847"><path d="M236 71.5 L239.5 67 L243 71.5 Z" fill="#d2d4d6"/><path d="M235.5 819 L239.5 823.5 L243.5 819 Z" fill="#d2d4d6"/><path d="M10.5 834.5 L6.5 838.5 L10.5 842.5 Z" fill="#d2d4d6"/><path d="M221.5 834.5 L225.5 838.5 L221.5 842.5 Z" fill="#d2d4d6"/></svg>
<div class="a" style="left:17.00px;top:832.00px;width:181.00px;height:13.00px;background:#dcdcdc"></div>
<div class="a" style="left:11.00px;top:717.50px;width:181.00px;height:33.00px;border:3px solid #ef3b3b"></div>
<div class="a" style="left:248.00px;top:60.00px;width:1230.00px;height:787.00px;background:#f6f8f9"></div>
<div class="a" style="left:1478.00px;top:60.00px;width:10.00px;height:787.00px;background:#eceef0"></div>
<div class="a" style="left:0;top:0;width:1488px;height:847px;clip-path:inset(60.00px 0.00px 0.00px 1478.00px)">
<span id="t44" class="t" style="left:1480.00px;top:66.24px;font-size:12px;line-height:14.40px;color:#333;font-weight:normal;">--</span>
<span id="t45" class="t" style="left:1482.30px;top:85.32px;font-size:13.5px;line-height:16.20px;color:#444;font-weight:normal;transform:scaleX(0.9630);transform-origin:0 0;">И</span>
<span id="t46" class="t" style="left:1480.00px;top:104.69px;font-size:12px;line-height:14.40px;color:#333;font-weight:normal;">--</span>
<span id="t47" class="t" style="left:1482.30px;top:123.77px;font-size:13.5px;line-height:16.20px;color:#444;font-weight:normal;transform:scaleX(0.9630);transform-origin:0 0;">И</span>
<span id="t48" class="t" style="left:1480.00px;top:143.14px;font-size:12px;line-height:14.40px;color:#333;font-weight:normal;">--</span>
<span id="t49" class="t" style="left:1482.30px;top:162.22px;font-size:13.5px;line-height:16.20px;color:#444;font-weight:normal;transform:scaleX(0.9630);transform-origin:0 0;">И</span>
<span id="t50" class="t" style="left:1480.00px;top:181.59px;font-size:12px;line-height:14.40px;color:#333;font-weight:normal;">--</span>
<span id="t51" class="t" style="left:1482.30px;top:200.67px;font-size:13.5px;line-height:16.20px;color:#444;font-weight:normal;transform:scaleX(0.9630);transform-origin:0 0;">И</span>
<span id="t52" class="t" style="left:1480.00px;top:220.04px;font-size:12px;line-height:14.40px;color:#333;font-weight:normal;">--</span>
<span id="t53" class="t" style="left:1482.30px;top:239.12px;font-size:13.5px;line-height:16.20px;color:#444;font-weight:normal;transform:scaleX(0.9630);transform-origin:0 0;">И</span>
<span id="t54" class="t" style="left:1480.00px;top:258.49px;font-size:12px;line-height:14.40px;color:#333;font-weight:normal;">--</span>
<span id="t55" class="t" style="left:1482.30px;top:277.57px;font-size:13.5px;line-height:16.20px;color:#444;font-weight:normal;transform:scaleX(0.9630);transform-origin:0 0;">И</span>
</div>
<svg class="a" style="left:0;top:0" width="1488" height="847" viewBox="0 0 1488 847"><path d="M1483.5 836 L1480 839 L1483.5 842 Z" fill="#cfd1d3"/><path d="M1485 836 L1488.5 839 L1485 842 Z" fill="#cfd1d3"/></svg>
<div class="a" style="left:248.00px;top:89.00px;width:1230.00px;height:1.00px;background:#cfd3d8"></div>
<div class="a" style="left:552.00px;top:65.00px;width:205.00px;height:25.00px;background:#fff;border:1px solid #cfd3d8;border-bottom:none;border-radius:6px 6px 0 0"></div>
<svg class="a" style="left:0;top:0" width="1488" height="100" viewBox="0 0 1488 100"><path d="M286.4 76.4 L294.0 72.0 L301.6 76.4 L294.0 80.8 Z" stroke="#2e2e2e" stroke-width="1.3" stroke-linejoin="round" fill="none"/><path d="M286.6 79.7 L294.0 83.9 L301.4 79.7" stroke="#3cbff0" stroke-width="1.5" stroke-linejoin="round" stroke-linecap="round" fill="none"/><path d="M584.9 76.4 L592.5 72.0 L600.1 76.4 L592.5 80.8 Z" stroke="#2e2e2e" stroke-width="1.3" stroke-linejoin="round" fill="none"/><path d="M585.1 79.7 L592.5 83.9 L599.9 79.7" stroke="#3cbff0" stroke-width="1.5" stroke-linejoin="round" stroke-linecap="round" fill="none"/><path d="M504.5 71.5 L516.5 83.5 M516.5 71.5 L504.5 83.5" stroke="#858585" stroke-width="1.8"/><path d="M709 71.5 L721 83.5 M721 71.5 L709 83.5" stroke="#858585" stroke-width="1.8"/><path d="M1431 84.5 L1432.3 79.5 L1443 68.8 L1446.7 72.5 L1436 83.2 Z M1432.3 79.5 L1436 83.2 M1441 70.8 L1444.7 74.5" stroke="#a0a0a0" stroke-width="1.2" fill="none" stroke-linejoin="round"/><path d="M1454.5 74.5 V70.5 H1458.5 M1464.5 70.5 H1468.5 V74.5 M1468.5 80 V84 H1464.5 M1458.5 84 H1454.5 V80" stroke="#9aa0a4" stroke-width="1.8" fill="none"/></svg>
<span id="t56" class="t" style="left:309.00px;top:70.32px;font-size:13.5px;line-height:16.20px;color:#8c9199;font-weight:normal;transform:scaleX(0.9096);transform-origin:0 0;">Накладные (закупка)</span>
<span id="t57" class="t" style="left:608.00px;top:70.32px;font-size:13.5px;line-height:16.20px;color:#27b193;font-weight:normal;transform:scaleX(0.9225);transform-origin:0 0;">Текущие остатки</span>
<div class="a" style="left:257.50px;top:105.00px;width:14.50px;height:14.50px;background:#fff;border:1px solid #d9dce0;border-radius:3px"></div>
<span id="t58" class="t" style="left:280.00px;top:104.82px;font-size:13.5px;line-height:16.20px;color:#2b2b2b;font-weight:normal;transform:scaleX(0.9380);transform-origin:0 0;">Несколько складов</span>
<span id="t59" class="t" style="left:400.00px;top:104.82px;font-size:13.5px;line-height:16.20px;color:#2b2b2b;font-weight:normal;transform:scaleX(0.9499);transform-origin:0 0;">Наименование</span>
<div class="a" style="left:496.00px;top:100.00px;width:317.00px;height:24.50px;background:#fff;border:1px solid #dde0e4;border-radius:6px"></div>
<span id="t60" class="t" style="left:502.00px;top:104.82px;font-size:13.5px;line-height:16.20px;color:#222;font-weight:normal;transform:scaleX(0.9658);transform-origin:0 0;">Гипер-Фьюжен</span>
<div class="a" style="left:914.00px;top:100.00px;width:172.50px;height:24.50px;background:#fff;border:1px solid #dde0e4;border-radius:6px"></div>
<span id="t61" class="t" style="left:822.00px;top:104.82px;font-size:13.5px;line-height:16.20px;color:#2b2b2b;font-weight:normal;transform:scaleX(0.9309);transform-origin:0 0;">Штрихкод (F4)</span>
<span id="t62" class="t" style="left:1096.00px;top:104.82px;font-size:13.5px;line-height:16.20px;color:#2b2b2b;font-weight:normal;transform:scaleX(0.9105);transform-origin:0 0;">Список SKU</span>
<div class="a" style="left:1173.00px;top:100.00px;width:278.50px;height:24.50px;background:#f6f8f9;border:1px solid #8f9c9c;border-radius:6px"></div>
<div class="a" style="left:1299.00px;top:100.00px;width:1.00px;height:24.50px;background:#8f9c9c"></div>
<span id="t63" class="t" style="left:1237.00px;top:104.82px;font-size:13.5px;line-height:16.20px;color:#9ba1a3;font-weight:normal;transform:translateX(-50%) scaleX(0.9415);transform-origin:50% 0;">ПЛ00052</span>
<span id="t64" class="t" style="left:1375.50px;top:104.82px;font-size:13.5px;line-height:16.20px;color:#9ba1a3;font-weight:normal;transform:translateX(-50%) scaleX(0.9290);transform-origin:50% 0;">Для расценки</span>
<div class="a" style="left:1463.00px;top:107.00px;width:13.00px;height:679.00px;background:#dcdcdc"></div>
<svg class="a" style="left:0;top:0" width="1488" height="847" viewBox="0 0 1488 847"><path d="M1466 101.5 L1469.5 97.5 L1473 101.5 Z" fill="#d2d4d6"/><path d="M1465.7 836 L1469.4 840 L1473 836 Z" fill="#d2d4d6"/></svg>
<svg class="a" style="left:0;top:0" width="1488" height="847" viewBox="0 0 1488 847"><path d="M788.0 109.3 L793.1 114.9 L798.3 109.3" stroke="#333" stroke-width="1.6" fill="none" stroke-linecap="round" stroke-linejoin="round"/><path d="M258.2 137.2 L262.2 141.7 L266.2 137.2" stroke="#7f8c95" stroke-width="1.25" fill="none" stroke-linecap="round" stroke-linejoin="round"/><path d="M568.2 137.2 L572.2 141.7 L576.2 137.2" stroke="#7f8c95" stroke-width="1.25" fill="none" stroke-linecap="round" stroke-linejoin="round"/></svg>
<span id="t65" class="t" style="left:270.00px;top:132.93px;font-size:11.8px;line-height:14.16px;color:#9ba1a7;font-weight:normal;transform:scaleX(0.9650);transform-origin:0 0;">Группы</span>
<span id="t66" class="t" style="left:580.00px;top:132.93px;font-size:11.8px;line-height:14.16px;color:#9ba1a7;font-weight:normal;transform:scaleX(0.8541);transform-origin:0 0;">Склад</span>
<div class="a" style="left:557.00px;top:129.00px;width:1.00px;height:718.00px;background:#d5d8dc"></div>
<div class="a" style="left:257.00px;top:154.00px;width:292.00px;height:66.00px;background:#fff"></div>
<span id="t67" class="t" style="left:294.00px;top:180.63px;font-size:11.8px;line-height:14.16px;color:#262626;font-weight:bold;transform:scaleX(0.9772);transform-origin:0 0;">Дерево</span>
<span id="t68" class="t" style="left:442.30px;top:180.63px;font-size:11.8px;line-height:14.16px;color:#262626;font-weight:bold;transform:scaleX(0.9599);transform-origin:0 0;">Наименование</span>
<div class="a" style="left:257.00px;top:220.00px;width:292.00px;height:28.60px;background:#e4e4e4"></div>
<div class="a" style="left:257.00px;top:276.40px;width:292.00px;height:1.00px;background:#dcdfe3"></div>
<div class="a" style="left:257.00px;top:305.20px;width:292.00px;height:1.00px;background:#dcdfe3"></div>
<div class="a" style="left:257.00px;top:333.50px;width:292.00px;height:1.00px;background:#dcdfe3"></div>
<svg class="a" style="left:0;top:0" width="1488" height="847" viewBox="0 0 1488 847"><path d="M379.10 181.10 V191.10" stroke="#1a1a1a" stroke-width="1.5" fill="none"/><path d="M376.50 183.20 L379.10 180.70 L381.70 183.20" stroke="#1a1a1a" stroke-width="1.4" fill="none" stroke-linecap="round"/><path d="M383.40 180.60 H385.50" stroke="#1a1a1a" stroke-width="1.35" fill="none"/><path d="M383.40 183.90 H387.20" stroke="#1a1a1a" stroke-width="1.35" fill="none"/><path d="M383.40 187.20 H388.70" stroke="#1a1a1a" stroke-width="1.35" fill="none"/><path d="M383.40 190.40 H390.20" stroke="#1a1a1a" stroke-width="1.35" fill="none"/><path d="M424.10 181.10 V191.10" stroke="#1a1a1a" stroke-width="1.5" fill="none"/><path d="M421.50 183.20 L424.10 180.70 L426.70 183.20" stroke="#1a1a1a" stroke-width="1.4" fill="none" stroke-linecap="round"/><path d="M428.40 180.60 H430.50" stroke="#1a1a1a" stroke-width="1.35" fill="none"/><path d="M428.40 183.90 H432.20" stroke="#1a1a1a" stroke-width="1.35" fill="none"/><path d="M428.40 187.20 H433.70" stroke="#1a1a1a" stroke-width="1.35" fill="none"/><path d="M428.40 190.40 H435.20" stroke="#1a1a1a" stroke-width="1.35" fill="none"/><path d="M262.8 231.3 L268.1 237.3 L273.4 231.3" stroke="#3a3a3a" stroke-width="1.0" fill="none" stroke-linecap="round" stroke-linejoin="round"/><path d="M280.8 257.8 L286.6 262.7 L280.8 267.6" stroke="#3a3a3a" stroke-width="1.05" fill="none"/><path d="M280.8 286 L286.6 290.9 L280.8 295.8" stroke="#3a3a3a" stroke-width="1.05" fill="none"/><path d="M280.5 314.7 L285 318.7 L280.5 322.7 M287.2 313.8 V323.6" stroke="#3a3a3a" stroke-width="1.05" fill="none"/></svg>
<div class="a" style="left:0;top:0;width:1488px;height:847px;clip-path:inset(154.00px 939.00px 507.00px 257.00px)">
<span id="t69" class="t" style="right:1097.50px;top:226.72px;font-size:13.5px;line-height:16.20px;color:#222;font-weight:normal;transform:scaleX(0.9626);transform-origin:100% 0;">1</span>
<span id="t70" class="t" style="left:400.00px;top:226.72px;font-size:13.5px;line-height:16.20px;color:#222;font-weight:normal;transform:scaleX(0.9349);transform-origin:0 0;">Все</span>
<span id="t71" class="t" style="right:1097.50px;top:255.12px;font-size:13.5px;line-height:16.20px;color:#222;font-weight:normal;transform:scaleX(0.9626);transform-origin:100% 0;">1</span>
<span id="t72" class="t" style="left:400.00px;top:255.12px;font-size:13.5px;line-height:16.20px;color:#222;font-weight:normal;transform:scaleX(0.9332);transform-origin:0 0;">Продовольственные товары</span>
<span id="t73" class="t" style="right:1097.50px;top:283.52px;font-size:13.5px;line-height:16.20px;color:#222;font-weight:normal;transform:scaleX(0.9626);transform-origin:100% 0;">2</span>
<span id="t74" class="t" style="left:400.00px;top:283.52px;font-size:13.5px;line-height:16.20px;color:#222;font-weight:normal;transform:scaleX(0.9333);transform-origin:0 0;">Непродовольственные товары</span>
<span id="t75" class="t" style="right:1097.50px;top:311.92px;font-size:13.5px;line-height:16.20px;color:#222;font-weight:normal;transform:scaleX(0.9626);transform-origin:100% 0;">3</span>
<span id="t76" class="t" style="left:400.00px;top:311.92px;font-size:13.5px;line-height:16.20px;color:#222;font-weight:normal;transform:scaleX(0.9337);transform-origin:0 0;">Подарочный сертификаты</span>
</div>
<div class="a" style="left:257.00px;top:818.00px;width:292.00px;height:1.00px;background:#dcdfe3"></div>
<svg class="a" style="left:0;top:0" width="1488" height="847" viewBox="0 0 1488 847"><path d="M262.5 828.5 H276 L270.8 835 V841.5 L267.7 840 V835 Z" stroke="#a8b2b0" stroke-width="1.3" fill="none" stroke-linejoin="round"/><path d="M294.5 829.0 L301.0 835.0 L307.5 829.0" stroke="#a8b2b0" stroke-width="1.3" fill="none" stroke-linecap="round" stroke-linejoin="round"/><path d="M294.5 834.5 L301.0 840.5 L307.5 834.5" stroke="#a8b2b0" stroke-width="1.3" fill="none" stroke-linecap="round" stroke-linejoin="round"/><path d="M318 832 L324 827.8 L330 832 M318 838.2 L324 842.4 L330 838.2 M317.5 835.1 H330.5" stroke="#a8b2b0" stroke-width="1.3" fill="none"/></svg>
<div class="a" style="left:451.70px;top:828.00px;width:13.00px;height:13.00px;background:#2b3a4e;border-radius:2.5px"></div>
<svg class="a" style="left:0;top:0" width="1488" height="847" viewBox="0 0 1488 847"><path d="M455.4 834.8 L457.4 836.6 L460.8 832.6" stroke="#fff" stroke-width="1.5" fill="none" stroke-linecap="round" stroke-linejoin="round"/></svg>
<span id="t77" class="t" style="left:468.80px;top:826.32px;font-size:13.5px;line-height:16.20px;color:#333;font-weight:normal;transform:scaleX(0.9237);transform-origin:0 0;">Активные (F6)</span>
<div class="a" style="left:567.00px;top:154.00px;width:868.00px;height:303.00px;background:#fff"></div>
<span id="t78" class="t" style="left:578.70px;top:176.93px;font-size:11.8px;line-height:14.16px;color:#262626;font-weight:bold;transform:scaleX(0.9195);transform-origin:0 0;">Отм.</span>
<span id="t79" class="t" style="left:699.40px;top:176.93px;font-size:11.8px;line-height:14.16px;color:#262626;font-weight:bold;transform:scaleX(0.9547);transform-origin:0 0;">Наименование</span>
<span id="t80" class="t" style="left:877.50px;top:176.93px;font-size:11.8px;line-height:14.16px;color:#262626;font-weight:bold;transform:scaleX(0.9539);transform-origin:0 0;">Штрихкод</span>
<span id="t81" class="t" style="left:995.30px;top:176.93px;font-size:11.8px;line-height:14.16px;color:#262626;font-weight:bold;transform:scaleX(1.0223);transform-origin:0 0;">Код</span>
<span id="t82" class="t" style="left:1087.70px;top:176.93px;font-size:11.8px;line-height:14.16px;color:#262626;font-weight:bold;transform:scaleX(0.9199);transform-origin:0 0;">Страна</span>
<span id="t83" class="t" style="left:1176.00px;top:176.93px;font-size:11.8px;line-height:14.16px;color:#262626;font-weight:bold;transform:scaleX(0.8914);transform-origin:0 0;">Ед. изм.</span>
<div class="a" style="left:0;top:0;width:1488px;height:847px;clip-path:inset(154.00px 53.00px 634.00px 567.00px)">
<span id="t84" class="t" style="left:1230.60px;top:168.63px;font-size:11.8px;line-height:14.16px;color:#262626;font-weight:bold;transform:scaleX(0.9807);transform-origin:0 0;">Текущий</span>
<span id="t85" class="t" style="left:1230.60px;top:185.63px;font-size:11.8px;line-height:14.16px;color:#262626;font-weight:bold;transform:scaleX(0.9308);transform-origin:0 0;">остаток</span>
<span id="t86" class="t" style="left:1291.00px;top:168.63px;font-size:11.8px;line-height:14.16px;color:#262626;font-weight:bold;transform:scaleX(0.9807);transform-origin:0 0;">Текущий</span>
<span id="t87" class="t" style="left:1291.00px;top:185.63px;font-size:11.8px;line-height:14.16px;color:#262626;font-weight:bold;transform:scaleX(0.9275);transform-origin:0 0;">резерв</span>
<span id="t88" class="t" style="left:1351.50px;top:160.43px;font-size:11.8px;line-height:14.16px;color:#262626;font-weight:bold;transform:scaleX(0.9315);transform-origin:0 0;">Доступн</span>
<span id="t89" class="t" style="left:1351.50px;top:177.43px;font-size:11.8px;line-height:14.16px;color:#262626;font-weight:bold;transform:scaleX(0.9439);transform-origin:0 0;">ое к-во</span>
<span id="t90" class="t" style="left:1351.50px;top:194.43px;font-size:11.8px;line-height:14.16px;color:#262626;font-weight:bold;transform:scaleX(0.8915);transform-origin:0 0;">(всего)</span>
<span id="t91" class="t" style="left:1411.60px;top:160.43px;font-size:11.8px;line-height:14.16px;color:#262626;font-weight:bold;transform:scaleX(0.9483);transform-origin:0 0;">Цена</span>
<span id="t92" class="t" style="left:1411.60px;top:177.43px;font-size:11.8px;line-height:14.16px;color:#262626;font-weight:bold;transform:scaleX(0.9485);transform-origin:0 0;">(средн.</span>
<span id="t93" class="t" style="left:1411.60px;top:194.43px;font-size:11.8px;line-height:14.16px;color:#262626;font-weight:bold;transform:scaleX(0.9485);transform-origin:0 0;">зв.)</span>
</div>
<div class="a" style="left:567.00px;top:213.00px;width:868.00px;height:1.00px;background:#dfe2e7"></div>
<div class="a" style="left:0;top:0;width:1488px;height:847px;clip-path:inset(213.50px 53.00px 391.50px 567.00px)">
<div class="a" style="left:567.00px;top:241.47px;width:868.00px;height:1.00px;background:#e2e5ea"></div>
<div class="a" style="left:585.00px;top:221.19px;width:13.00px;height:13.00px;background:#fff;border:1px solid #dcdfe3;border-radius:2.5px"></div>
<div class="a" style="left:0;top:0;width:1488px;height:847px;clip-path:inset(213.30px 642.00px 605.53px 617.00px)">
<span id="t94" class="t" style="left:620.00px;top:220.41px;font-size:13.5px;line-height:16.20px;color:#242424;font-weight:normal;transform:scaleX(0.8942);transform-origin:0 0;">Пиво Pilsener 5% 0,45 л ст/бут EFES</span>
</div>
<div class="a" style="left:0;top:0;width:1488px;height:847px;clip-path:inset(213.30px 523.00px 605.53px 846.00px)">
<span id="t95" class="t" style="left:850.50px;top:220.41px;font-size:13.5px;line-height:16.20px;color:#242424;font-weight:normal;transform:scaleX(0.9816);transform-origin:0 0;">4605622008852</span>
</div>
<div class="a" style="left:0;top:0;width:1488px;height:847px;clip-path:inset(213.30px 439.50px 605.53px 965.00px)">
<span id="t96" class="t" style="left:969.30px;top:220.41px;font-size:13.5px;line-height:16.20px;color:#242424;font-weight:normal;transform:scaleX(1.0056);transform-origin:0 0;">4605622008852</span>
</div>
<span id="t97" class="t" style="left:1052.50px;top:220.41px;font-size:13.5px;line-height:16.20px;color:#242424;font-weight:normal;transform:scaleX(0.9358);transform-origin:0 0;">Россия</span>
<span id="t98" class="t" style="left:1171.00px;top:220.41px;font-size:13.5px;line-height:16.20px;color:#242424;font-weight:normal;transform:scaleX(0.9633);transform-origin:0 0;">шт</span>
<span id="t99" class="t" style="right:205.00px;top:220.41px;font-size:13.5px;line-height:16.20px;color:#242424;font-weight:normal;transform:scaleX(0.9491);transform-origin:100% 0;">15</span>
<span id="t100" class="t" style="right:84.50px;top:220.41px;font-size:13.5px;line-height:16.20px;color:#242424;font-weight:normal;transform:scaleX(0.9491);transform-origin:100% 0;">15</span>
<div class="a" style="left:0;top:0;width:1488px;height:847px;clip-path:inset(213.30px 53.00px 605.53px 1407.00px)">
<span id="t101" class="t" style="left:1431.60px;top:220.41px;font-size:13.5px;line-height:16.20px;color:#242424;font-weight:normal;transform:scaleX(0.9477);transform-origin:0 0;">3 150,00</span>
</div>
<div class="a" style="left:567.00px;top:269.64px;width:868.00px;height:1.00px;background:#e2e5ea"></div>
<div class="a" style="left:585.00px;top:249.36px;width:13.00px;height:13.00px;background:#fff;border:1px solid #dcdfe3;border-radius:2.5px"></div>
<div class="a" style="left:0;top:0;width:1488px;height:847px;clip-path:inset(241.47px 642.00px 577.36px 617.00px)">
<span id="t102" class="t" style="left:620.00px;top:248.58px;font-size:13.5px;line-height:16.20px;color:#242424;font-weight:normal;transform:scaleX(0.8940);transform-origin:0 0;">Пиво темное 4,1% 0,45 л ст/бут Krusovice</span>
</div>
<div class="a" style="left:0;top:0;width:1488px;height:847px;clip-path:inset(241.47px 523.00px 577.36px 846.00px)">
<span id="t103" class="t" style="left:850.50px;top:248.58px;font-size:13.5px;line-height:16.20px;color:#242424;font-weight:normal;transform:scaleX(0.9816);transform-origin:0 0;">4601501210101</span>
</div>
<div class="a" style="left:0;top:0;width:1488px;height:847px;clip-path:inset(241.47px 439.50px 577.36px 965.00px)">
<span id="t104" class="t" style="left:969.30px;top:248.58px;font-size:13.5px;line-height:16.20px;color:#242424;font-weight:normal;transform:scaleX(1.0056);transform-origin:0 0;">4601501210101</span>
</div>
<span id="t105" class="t" style="left:1052.50px;top:248.58px;font-size:13.5px;line-height:16.20px;color:#242424;font-weight:normal;transform:scaleX(0.9358);transform-origin:0 0;">Россия</span>
<span id="t106" class="t" style="left:1171.00px;top:248.58px;font-size:13.5px;line-height:16.20px;color:#242424;font-weight:normal;transform:scaleX(0.9633);transform-origin:0 0;">шт</span>
<span id="t107" class="t" style="right:205.00px;top:248.58px;font-size:13.5px;line-height:16.20px;color:#242424;font-weight:normal;transform:scaleX(0.9491);transform-origin:100% 0;">15</span>
<span id="t108" class="t" style="right:84.50px;top:248.58px;font-size:13.5px;line-height:16.20px;color:#242424;font-weight:normal;transform:scaleX(0.9491);transform-origin:100% 0;">15</span>
<div class="a" style="left:0;top:0;width:1488px;height:847px;clip-path:inset(241.47px 53.00px 577.36px 1407.00px)">
<span id="t109" class="t" style="left:1430.70px;top:248.58px;font-size:13.5px;line-height:16.20px;color:#242424;font-weight:normal;transform:scaleX(0.9477);transform-origin:0 0;">4 200,00</span>
</div>
<div class="a" style="left:617.00px;top:270.34px;width:610.00px;height:27.47px;background:#d5ddf9"></div>
<div class="a" style="left:567.00px;top:297.81px;width:868.00px;height:1.00px;background:#e2e5ea"></div>
<div class="a" style="left:585.00px;top:277.52px;width:13.50px;height:13.00px;background:#2b3a4e;border-radius:2.5px"></div>
<div class="a" style="left:0;top:0;width:1488px;height:847px;clip-path:inset(269.64px 642.00px 549.19px 617.00px)">
<span id="t110" class="t" style="left:620.00px;top:276.75px;font-size:13.5px;line-height:16.20px;color:#242424;font-weight:normal;transform:scaleX(0.8981);transform-origin:0 0;">Подгузники детские одноразовые размер 4</span>
</div>
<div class="a" style="left:0;top:0;width:1488px;height:847px;clip-path:inset(269.64px 523.00px 549.19px 846.00px)">
<span id="t111" class="t" style="left:850.50px;top:276.75px;font-size:13.5px;line-height:16.20px;color:#242424;font-weight:normal;transform:scaleX(0.9816);transform-origin:0 0;">6955048509630</span>
</div>
<div class="a" style="left:0;top:0;width:1488px;height:847px;clip-path:inset(269.64px 439.50px 549.19px 965.00px)">
<span id="t112" class="t" style="left:969.30px;top:276.75px;font-size:13.5px;line-height:16.20px;color:#242424;font-weight:normal;transform:scaleX(1.0056);transform-origin:0 0;">6955048509630</span>
</div>
<span id="t113" class="t" style="left:1052.50px;top:276.75px;font-size:13.5px;line-height:16.20px;color:#242424;font-weight:normal;transform:scaleX(0.9354);transform-origin:0 0;">Китай</span>
<span id="t114" class="t" style="left:1171.00px;top:276.75px;font-size:13.5px;line-height:16.20px;color:#242424;font-weight:normal;transform:scaleX(0.9633);transform-origin:0 0;">шт</span>
<span id="t115" class="t" style="right:205.00px;top:276.75px;font-size:13.5px;line-height:16.20px;color:#242424;font-weight:normal;transform:scaleX(0.9494);transform-origin:100% 0;">600</span>
<span id="t116" class="t" style="right:84.50px;top:276.75px;font-size:13.5px;line-height:16.20px;color:#242424;font-weight:normal;transform:scaleX(0.9494);transform-origin:100% 0;">600</span>
<div class="a" style="left:0;top:0;width:1488px;height:847px;clip-path:inset(269.64px 53.00px 549.19px 1407.00px)">
<span id="t117" class="t" style="left:1411.90px;top:276.75px;font-size:13.5px;line-height:16.20px;color:#242424;font-weight:normal;transform:scaleX(0.9485);transform-origin:0 0;">559 300</span>
</div>
<div class="a" style="left:567.00px;top:325.98px;width:868.00px;height:1.00px;background:#e2e5ea"></div>
<div class="a" style="left:585.00px;top:305.69px;width:13.00px;height:13.00px;background:#fff;border:1px solid #dcdfe3;border-radius:2.5px"></div>
<div class="a" style="left:0;top:0;width:1488px;height:847px;clip-path:inset(297.81px 642.00px 521.02px 617.00px)">
<span id="t118" class="t" style="left:620.00px;top:304.92px;font-size:13.5px;line-height:16.20px;color:#242424;font-weight:normal;transform:scaleX(0.8959);transform-origin:0 0;">Ром 40% выдержка 7 лет 0,7 л ст/бут Havana Club</span>
</div>
<div class="a" style="left:0;top:0;width:1488px;height:847px;clip-path:inset(297.81px 523.00px 521.02px 846.00px)">
<span id="t119" class="t" style="left:850.50px;top:304.92px;font-size:13.5px;line-height:16.20px;color:#242424;font-weight:normal;transform:scaleX(0.9820);transform-origin:0 0;">8501110080439</span>
</div>
<div class="a" style="left:0;top:0;width:1488px;height:847px;clip-path:inset(297.81px 439.50px 521.02px 965.00px)">
<span id="t120" class="t" style="left:969.30px;top:304.92px;font-size:13.5px;line-height:16.20px;color:#242424;font-weight:normal;transform:scaleX(1.0065);transform-origin:0 0;">8501110080439</span>
</div>
<span id="t121" class="t" style="left:1052.50px;top:304.92px;font-size:13.5px;line-height:16.20px;color:#242424;font-weight:normal;transform:scaleX(0.9358);transform-origin:0 0;">Куба</span>
<span id="t122" class="t" style="left:1171.00px;top:304.92px;font-size:13.5px;line-height:16.20px;color:#242424;font-weight:normal;transform:scaleX(0.9633);transform-origin:0 0;">шт</span>
<span id="t123" class="t" style="right:205.00px;top:304.92px;font-size:13.5px;line-height:16.20px;color:#242424;font-weight:normal;transform:scaleX(0.9501);transform-origin:100% 0;">2</span>
<span id="t124" class="t" style="right:84.50px;top:304.92px;font-size:13.5px;line-height:16.20px;color:#242424;font-weight:normal;transform:scaleX(0.9501);transform-origin:100% 0;">2</span>
<div class="a" style="left:0;top:0;width:1488px;height:847px;clip-path:inset(297.81px 53.00px 521.02px 1407.00px)">
<span id="t125" class="t" style="left:1414.80px;top:304.92px;font-size:13.5px;line-height:16.20px;color:#242424;font-weight:normal;transform:scaleX(0.9477);transform-origin:0 0;">1 372,00</span>
</div>
<div class="a" style="left:567.00px;top:354.15px;width:868.00px;height:1.00px;background:#e2e5ea"></div>
<div class="a" style="left:585.00px;top:333.87px;width:13.50px;height:13.00px;background:#2b3a4e;border-radius:2.5px"></div>
<div class="a" style="left:0;top:0;width:1488px;height:847px;clip-path:inset(325.98px 642.00px 492.85px 617.00px)">
<span id="t126" class="t" style="left:620.00px;top:333.09px;font-size:13.5px;line-height:16.20px;color:#242424;font-weight:normal;transform:scaleX(0.8927);transform-origin:0 0;">Ром Silver 40% 0,5 л ст/бут Black Monkey</span>
</div>
<div class="a" style="left:0;top:0;width:1488px;height:847px;clip-path:inset(325.98px 523.00px 492.85px 846.00px)">
<span id="t127" class="t" style="left:850.50px;top:333.09px;font-size:13.5px;line-height:16.20px;color:#242424;font-weight:normal;transform:scaleX(0.9816);transform-origin:0 0;">4813852005125</span>
</div>
<div class="a" style="left:0;top:0;width:1488px;height:847px;clip-path:inset(325.98px 439.50px 492.85px 965.00px)">
<span id="t128" class="t" style="left:969.30px;top:333.09px;font-size:13.5px;line-height:16.20px;color:#242424;font-weight:normal;transform:scaleX(1.0056);transform-origin:0 0;">4813852005125</span>
</div>
<span id="t129" class="t" style="left:1052.50px;top:333.09px;font-size:13.5px;line-height:16.20px;color:#242424;font-weight:normal;transform:scaleX(0.9360);transform-origin:0 0;">Беларусь</span>
<span id="t130" class="t" style="left:1171.00px;top:333.09px;font-size:13.5px;line-height:16.20px;color:#242424;font-weight:normal;transform:scaleX(0.9633);transform-origin:0 0;">шт</span>
<span id="t131" class="t" style="right:205.00px;top:333.09px;font-size:13.5px;line-height:16.20px;color:#242424;font-weight:normal;transform:scaleX(0.9501);transform-origin:100% 0;">6</span>
<span id="t132" class="t" style="right:84.50px;top:333.09px;font-size:13.5px;line-height:16.20px;color:#242424;font-weight:normal;transform:scaleX(0.9501);transform-origin:100% 0;">6</span>
<div class="a" style="left:0;top:0;width:1488px;height:847px;clip-path:inset(325.98px 53.00px 492.85px 1407.00px)">
<span id="t133" class="t" style="left:1424.20px;top:333.09px;font-size:13.5px;line-height:16.20px;color:#242424;font-weight:normal;transform:scaleX(0.9480);transform-origin:0 0;">31 500,00</span>
</div>
<div class="a" style="left:567.00px;top:382.32px;width:868.00px;height:1.00px;background:#e2e5ea"></div>
<div class="a" style="left:585.00px;top:362.04px;width:13.50px;height:13.00px;background:#2b3a4e;border-radius:2.5px"></div>
<div class="a" style="left:0;top:0;width:1488px;height:847px;clip-path:inset(354.15px 642.00px 464.68px 617.00px)">
<span id="t134" class="t" style="left:620.00px;top:361.26px;font-size:13.5px;line-height:16.20px;color:#242424;font-weight:normal;transform:scaleX(0.9004);transform-origin:0 0;">Сыр &quot;Беловежский трюфель&quot; м.д.ж.45%</span>
</div>
<div class="a" style="left:0;top:0;width:1488px;height:847px;clip-path:inset(354.15px 523.00px 464.68px 846.00px)">
<span id="t135" class="t" style="left:850.50px;top:361.26px;font-size:13.5px;line-height:16.20px;color:#242424;font-weight:normal;transform:scaleX(0.9817);transform-origin:0 0;">04732</span>
</div>
<div class="a" style="left:0;top:0;width:1488px;height:847px;clip-path:inset(354.15px 439.50px 464.68px 965.00px)">
<span id="t136" class="t" style="left:969.30px;top:361.26px;font-size:13.5px;line-height:16.20px;color:#242424;font-weight:normal;transform:scaleX(1.0054);transform-origin:0 0;">10270</span>
</div>
<span id="t137" class="t" style="left:1052.50px;top:361.26px;font-size:13.5px;line-height:16.20px;color:#242424;font-weight:normal;transform:scaleX(0.9360);transform-origin:0 0;">Беларусь</span>
<span id="t138" class="t" style="left:1171.00px;top:361.26px;font-size:13.5px;line-height:16.20px;color:#242424;font-weight:normal;transform:scaleX(0.9625);transform-origin:0 0;">кг</span>
<span id="t139" class="t" style="right:205.00px;top:361.26px;font-size:13.5px;line-height:16.20px;color:#242424;font-weight:normal;transform:scaleX(0.9501);transform-origin:100% 0;">1</span>
<span id="t140" class="t" style="right:84.50px;top:361.26px;font-size:13.5px;line-height:16.20px;color:#242424;font-weight:normal;transform:scaleX(0.9501);transform-origin:100% 0;">1</span>
<div class="a" style="left:0;top:0;width:1488px;height:847px;clip-path:inset(354.15px 53.00px 464.68px 1407.00px)">
<span id="t141" class="t" style="left:1424.00px;top:361.26px;font-size:13.5px;line-height:16.20px;color:#242424;font-weight:normal;transform:scaleX(0.9480);transform-origin:0 0;">77 000,00</span>
</div>
<div class="a" style="left:567.00px;top:410.49px;width:868.00px;height:1.00px;background:#e2e5ea"></div>
<div class="a" style="left:585.00px;top:390.21px;width:13.00px;height:13.00px;background:#fff;border:1px solid #dcdfe3;border-radius:2.5px"></div>
<div class="a" style="left:0;top:0;width:1488px;height:847px;clip-path:inset(382.32px 642.00px 436.51px 617.00px)">
<span id="t142" class="t" style="left:620.00px;top:389.43px;font-size:13.5px;line-height:16.20px;color:#242424;font-weight:normal;transform:scaleX(0.8964);transform-origin:0 0;">Сыр &quot;Белорусское золото&quot; выд.с м.д.ж. 45%</span>
</div>
<div class="a" style="left:0;top:0;width:1488px;height:847px;clip-path:inset(382.32px 523.00px 436.51px 846.00px)">
<span id="t143" class="t" style="left:850.50px;top:389.43px;font-size:13.5px;line-height:16.20px;color:#242424;font-weight:normal;transform:scaleX(0.9817);transform-origin:0 0;">10515</span>
</div>
<div class="a" style="left:0;top:0;width:1488px;height:847px;clip-path:inset(382.32px 439.50px 436.51px 965.00px)">
<span id="t144" class="t" style="left:969.30px;top:389.43px;font-size:13.5px;line-height:16.20px;color:#242424;font-weight:normal;transform:scaleX(1.0054);transform-origin:0 0;">13837</span>
</div>
<span id="t145" class="t" style="left:1052.50px;top:389.43px;font-size:13.5px;line-height:16.20px;color:#242424;font-weight:normal;transform:scaleX(0.9360);transform-origin:0 0;">Беларусь</span>
<span id="t146" class="t" style="left:1171.00px;top:389.43px;font-size:13.5px;line-height:16.20px;color:#242424;font-weight:normal;transform:scaleX(0.9625);transform-origin:0 0;">кг</span>
<span id="t147" class="t" style="right:205.00px;top:389.43px;font-size:13.5px;line-height:16.20px;color:#242424;font-weight:normal;transform:scaleX(0.9482);transform-origin:100% 0;">14,13</span>
<span id="t148" class="t" style="right:84.50px;top:389.43px;font-size:13.5px;line-height:16.20px;color:#242424;font-weight:normal;transform:scaleX(0.9482);transform-origin:100% 0;">14,13</span>
<div class="a" style="left:0;top:0;width:1488px;height:847px;clip-path:inset(382.32px 53.00px 436.51px 1407.00px)">
<span id="t149" class="t" style="left:1411.90px;top:389.43px;font-size:13.5px;line-height:16.20px;color:#242424;font-weight:normal;transform:scaleX(0.9485);transform-origin:0 0;">686 000</span>
</div>
<div class="a" style="left:567.00px;top:411.19px;width:868.00px;height:27.47px;background:#e4e4e4"></div>
<div class="a" style="left:567.00px;top:411.19px;width:50.00px;height:27.47px;background:#a9aaab"></div>
<div class="a" style="left:567.00px;top:438.66px;width:868.00px;height:1.00px;background:#e2e5ea"></div>
<div class="a" style="left:585.00px;top:418.38px;width:13.50px;height:13.00px;background:#2b3a4e;border-radius:2.5px"></div>
<div class="a" style="left:0;top:0;width:1488px;height:847px;clip-path:inset(410.49px 642.00px 408.34px 617.00px)">
<span id="t150" class="t" style="left:620.00px;top:417.60px;font-size:13.5px;line-height:16.20px;color:#242424;font-weight:normal;transform:scaleX(0.8945);transform-origin:0 0;">Сыр &quot;моцарелла голд&quot; м.д.ж. 40 %, вак 4</span>
</div>
<div class="a" style="left:0;top:0;width:1488px;height:847px;clip-path:inset(410.49px 523.00px 408.34px 846.00px)">
<span id="t151" class="t" style="left:850.50px;top:417.60px;font-size:13.5px;line-height:16.20px;color:#242424;font-weight:normal;transform:scaleX(0.9816);transform-origin:0 0;">4810904001425</span>
</div>
<div class="a" style="left:0;top:0;width:1488px;height:847px;clip-path:inset(410.49px 439.50px 408.34px 965.00px)">
<span id="t152" class="t" style="left:969.30px;top:417.60px;font-size:13.5px;line-height:16.20px;color:#242424;font-weight:normal;transform:scaleX(1.0056);transform-origin:0 0;">4810904001425</span>
</div>
<span id="t153" class="t" style="left:1052.50px;top:417.60px;font-size:13.5px;line-height:16.20px;color:#242424;font-weight:normal;transform:scaleX(0.9360);transform-origin:0 0;">Беларусь</span>
<span id="t154" class="t" style="left:1171.00px;top:417.60px;font-size:13.5px;line-height:16.20px;color:#242424;font-weight:normal;transform:scaleX(0.9633);transform-origin:0 0;">шт</span>
<span id="t155" class="t" style="right:205.00px;top:417.60px;font-size:13.5px;line-height:16.20px;color:#242424;font-weight:normal;transform:scaleX(0.9501);transform-origin:100% 0;">6</span>
<span id="t156" class="t" style="right:84.50px;top:417.60px;font-size:13.5px;line-height:16.20px;color:#242424;font-weight:normal;transform:scaleX(0.9501);transform-origin:100% 0;">6</span>
<div class="a" style="left:0;top:0;width:1488px;height:847px;clip-path:inset(410.49px 53.00px 408.34px 1407.00px)">
<span id="t157" class="t" style="left:1424.00px;top:417.60px;font-size:13.5px;line-height:16.20px;color:#242424;font-weight:normal;transform:scaleX(0.9480);transform-origin:0 0;">59 000,00</span>
</div>
<div class="a" style="left:567.00px;top:466.83px;width:868.00px;height:1.00px;background:#e2e5ea"></div>
<div class="a" style="left:585.00px;top:446.55px;width:13.00px;height:13.00px;background:#fff;border:1px solid #dcdfe3;border-radius:2.5px"></div>
<div class="a" style="left:0;top:0;width:1488px;height:847px;clip-path:inset(438.66px 642.00px 380.17px 617.00px)">
<span id="t158" class="t" style="left:620.00px;top:445.77px;font-size:13.5px;line-height:16.20px;color:#242424;font-weight:normal;transform:scaleX(0.8986);transform-origin:0 0;">Сырок гл 20% банан 45г Молочная страна</span>
</div>
<div class="a" style="left:0;top:0;width:1488px;height:847px;clip-path:inset(438.66px 523.00px 380.17px 846.00px)">
<span id="t159" class="t" style="left:850.50px;top:445.77px;font-size:13.5px;line-height:16.20px;color:#242424;font-weight:normal;transform:scaleX(0.9816);transform-origin:0 0;">4810319013679</span>
</div>
<div class="a" style="left:0;top:0;width:1488px;height:847px;clip-path:inset(438.66px 439.50px 380.17px 965.00px)">
<span id="t160" class="t" style="left:969.30px;top:445.77px;font-size:13.5px;line-height:16.20px;color:#242424;font-weight:normal;transform:scaleX(1.0056);transform-origin:0 0;">4810319013679</span>
</div>
<span id="t161" class="t" style="left:1052.50px;top:445.77px;font-size:13.5px;line-height:16.20px;color:#242424;font-weight:normal;transform:scaleX(0.9360);transform-origin:0 0;">Беларусь</span>
<span id="t162" class="t" style="left:1171.00px;top:445.77px;font-size:13.5px;line-height:16.20px;color:#242424;font-weight:normal;transform:scaleX(0.9633);transform-origin:0 0;">шт</span>
<span id="t163" class="t" style="right:205.00px;top:445.77px;font-size:13.5px;line-height:16.20px;color:#242424;font-weight:normal;transform:scaleX(0.9491);transform-origin:100% 0;">55</span>
<span id="t164" class="t" style="right:84.50px;top:445.77px;font-size:13.5px;line-height:16.20px;color:#242424;font-weight:normal;transform:scaleX(0.9491);transform-origin:100% 0;">55</span>
<div class="a" style="left:0;top:0;width:1488px;height:847px;clip-path:inset(438.66px 53.00px 380.17px 1407.00px)">
<span id="t165" class="t" style="left:1412.40px;top:445.77px;font-size:13.5px;line-height:16.20px;color:#242424;font-weight:normal;transform:scaleX(0.9485);transform-origin:0 0;">25 210</span>
</div>
<svg class="a" style="left:0;top:0" width="1488" height="847" viewBox="0 0 1488 847"><path d="M589 284.22 L590.9 286.02 L594.4 281.82" stroke="#fff" stroke-width="1.5" fill="none" stroke-linecap="round" stroke-linejoin="round"/><path d="M589 340.56 L590.9 342.37 L594.4 338.17" stroke="#fff" stroke-width="1.5" fill="none" stroke-linecap="round" stroke-linejoin="round"/><path d="M589 368.74 L590.9 370.54 L594.4 366.34" stroke="#fff" stroke-width="1.5" fill="none" stroke-linecap="round" stroke-linejoin="round"/><path d="M589 425.07 L590.9 426.88 L594.4 422.68" stroke="#fff" stroke-width="1.5" fill="none" stroke-linecap="round" stroke-linejoin="round"/></svg>
</div>
<svg class="a" style="left:0;top:0" width="1488" height="847" viewBox="0 0 1488 847"><path d="M682.00 177.80 V187.80" stroke="#1a1a1a" stroke-width="1.5" fill="none"/><path d="M679.40 179.90 L682.00 177.40 L684.60 179.90" stroke="#1a1a1a" stroke-width="1.4" fill="none" stroke-linecap="round"/><path d="M686.30 177.30 H688.40" stroke="#1a1a1a" stroke-width="1.35" fill="none"/><path d="M686.30 180.60 H690.10" stroke="#1a1a1a" stroke-width="1.35" fill="none"/><path d="M686.30 183.90 H691.60" stroke="#1a1a1a" stroke-width="1.35" fill="none"/><path d="M686.30 187.10 H693.10" stroke="#1a1a1a" stroke-width="1.35" fill="none"/></svg>
<div class="a" style="left:1437.00px;top:228.00px;width:13.00px;height:102.00px;background:#dcdcdc"></div>
<div class="a" style="left:584.00px;top:457.50px;width:275.00px;height:12.00px;background:#dcdcdc"></div>
<svg class="a" style="left:0;top:0" width="1488" height="847" viewBox="0 0 1488 847"><path d="M1440 165 L1443.5 161 L1447 165 Z" fill="#d2d4d6"/><path d="M1440 443.5 L1443.5 447.5 L1447 443.5 Z" fill="#d2d4d6"/><path d="M577.5 460 L573.5 463.5 L577.5 467 Z" fill="#d2d4d6"/><path d="M1425 460 L1429 463.5 L1425 467 Z" fill="#d2d4d6"/></svg>
<div class="a" style="left:562.40px;top:208.40px;width:54.50px;height:248.20px;border:3px solid #ef3b3b"></div>
<div class="a" style="left:567.00px;top:472.00px;width:889.00px;height:1.00px;background:#d9dce0"></div>
<div class="a" style="left:567.30px;top:477.40px;width:23.30px;height:23.30px;background:#e4e6e9;border-radius:5px"></div>
<svg class="a" style="left:0;top:0" width="1488" height="847" viewBox="0 0 1488 847"><circle cx="573.3" cy="484.5" r="0.9" fill="#fff"/><path d="M576.5 484.5 H587" stroke="#fff" stroke-width="1.1"/><circle cx="573.3" cy="488.5" r="0.9" fill="#fff"/><path d="M576.5 488.5 H587" stroke="#fff" stroke-width="1.1"/><circle cx="573.3" cy="492.5" r="0.9" fill="#fff"/><path d="M576.5 492.5 H587" stroke="#fff" stroke-width="1.1"/><rect x="595" y="483.5" width="15" height="9.8" stroke="#9eaaa8" stroke-width="1.1" fill="none"/><path d="M595 488.5 H610 M600 483.5 V493.3 M605 483.5 V493.3" stroke="#9eaaa8" stroke-width="1.1"/><path d="M628.5 482.2 H640.7 L635.8 488.6 V494.8 L633.5 495.6 V488.6 Z" stroke="#9eaaa8" stroke-width="1.1" fill="none" stroke-linejoin="round"/><polygon points="672.80,489.00 674.32,490.10 673.81,491.98 671.94,492.16 670.98,493.38 671.28,495.24 669.58,496.21 668.14,495.01 666.60,495.20 665.50,496.72 663.62,496.21 663.44,494.34 662.22,493.38 660.36,493.68 659.39,491.98 660.59,490.54 660.40,489.00 658.88,487.90 659.39,486.02 661.26,485.84 662.22,484.62 661.92,482.76 663.62,481.79 665.06,482.99 666.60,482.80 667.70,481.28 669.58,481.79 669.76,483.66 670.98,484.62 672.84,484.32 673.81,486.02 672.61,487.46" stroke="#9eaaa8" stroke-width="1.1" fill="none" stroke-linejoin="round"/><circle cx="666.6" cy="489" r="2.6" stroke="#9eaaa8" stroke-width="1.1" fill="none"/><path d="M716 489 H727.5 M721.5 483.2 V494.8" stroke="#9eaaa8" stroke-width="1.1"/><path d="M753.5 482 V492 M749.8 488.3 L753.5 492 L757.2 488.3 M745.8 491 V494.2 Q745.8 495.6 747.2 495.6 H759.8 Q761.2 495.6 761.2 494.2 V491" stroke="#9eaaa8" stroke-width="1.1" fill="none"/><path d="M777.5 491 V488 Q777.5 484.5 781 484.5 H791 M788.5 482 L791.2 484.5 L788.5 487 M793.5 487 V490 Q793.5 493.5 790 493.5 H780 M782.5 496 L779.8 493.5 L782.5 491" stroke="#9eaaa8" stroke-width="1.1" fill="none" stroke-linejoin="round"/></svg>
<span id="t166" class="t" style="left:689.40px;top:483.69px;font-size:11px;line-height:13.20px;color:#a9b3b1;font-weight:normal;transform:scaleX(0.9711);transform-origin:0 0;">123</span>
<div class="a" style="left:721.30px;top:505.00px;width:173.50px;height:25.60px;background:#fff;border:1px solid #dde0e4;border-radius:6px"></div>
<div class="a" style="left:903.00px;top:505.00px;width:77.70px;height:25.60px;background:#fff;border:1px solid #dde0e4;border-radius:6px"></div>
<div class="a" style="left:989.00px;top:505.00px;width:305.50px;height:25.60px;background:#fff;border:1px solid #dde0e4;border-radius:6px"></div>
<span id="t167" class="t" style="left:726.60px;top:509.82px;font-size:13.5px;line-height:16.20px;color:#222;font-weight:normal;transform:scaleX(0.9483);transform-origin:0 0;">Активный (ctrl F10)</span>
<span id="t168" class="t" style="left:908.60px;top:509.82px;font-size:13.5px;line-height:16.20px;color:#222;font-weight:normal;transform:scaleX(0.9022);transform-origin:0 0;">(Все)</span>
<span id="t169" class="t" style="left:994.50px;top:509.82px;font-size:13.5px;line-height:16.20px;color:#222;font-weight:normal;transform:scaleX(0.9319);transform-origin:0 0;">Товары с остатком (F10)</span>
<svg class="a" style="left:0;top:0" width="1488" height="847" viewBox="0 0 1488 847"><path d="M868.0 514.7 L873.8 520.7 L879.5 514.7" stroke="#333" stroke-width="1.5" fill="none" stroke-linecap="round" stroke-linejoin="round"/><path d="M954.5 514.7 L960.2 520.7 L966.0 514.7" stroke="#333" stroke-width="1.5" fill="none" stroke-linecap="round" stroke-linejoin="round"/><path d="M1268.0 514.7 L1273.8 520.7 L1279.5 514.7" stroke="#333" stroke-width="1.5" fill="none" stroke-linecap="round" stroke-linejoin="round"/></svg>
<div class="a" style="left:1327.60px;top:512.60px;width:11.20px;height:11.00px;background:#fff;border:1px solid #dcdfe3;border-radius:2.5px"></div>
<span id="t170" class="t" style="left:1343.60px;top:509.32px;font-size:13.5px;line-height:16.20px;color:#2b2b2b;font-weight:normal;transform:scaleX(0.9352);transform-origin:0 0;">В акции</span>
<span id="t171" class="t" style="left:1394.80px;top:509.82px;font-size:13.5px;line-height:16.20px;color:#9aa0a5;font-weight:normal;transform:scaleX(0.8901);transform-origin:0 0;">Отм.</span>
<span id="t172" class="t" style="left:1444.50px;top:509.82px;font-size:13.5px;line-height:16.20px;color:#333;font-weight:normal;transform:scaleX(0.9626);transform-origin:0 0;">4</span>
<div class="a" style="left:910.00px;top:540.50px;width:121.00px;height:21.00px;background:#fff;border:1px solid #d8dbe0;border-bottom:none;border-radius:6px 6px 0 0"></div>
<span id="t173" class="t" style="left:597.00px;top:545.22px;font-size:13.5px;line-height:16.20px;color:#8e9297;font-weight:normal;transform:scaleX(0.9299);transform-origin:0 0;">Изменение остатка по товару</span>
<span id="t174" class="t" style="left:835.00px;top:545.22px;font-size:13.5px;line-height:16.20px;color:#8e9297;font-weight:normal;transform:scaleX(0.9158);transform-origin:0 0;">Партия</span>
<span id="t175" class="t" style="left:943.00px;top:545.22px;font-size:13.5px;line-height:16.20px;color:#27b193;font-weight:normal;transform:scaleX(0.9250);transform-origin:0 0;">Действия</span>
<span id="t176" class="t" style="left:1063.50px;top:545.22px;font-size:13.5px;line-height:16.20px;color:#8e9297;font-weight:normal;transform:scaleX(0.9371);transform-origin:0 0;">Резерв (закупки)</span>
<span id="t177" class="t" style="left:1226.70px;top:545.22px;font-size:13.5px;line-height:16.20px;color:#8e9297;font-weight:normal;transform:scaleX(0.9390);transform-origin:0 0;">Резерв (продажи)</span>
<span id="t178" class="t" style="left:597.00px;top:568.82px;font-size:13.5px;line-height:16.20px;color:#8e9297;font-weight:normal;transform:scaleX(0.9361);transform-origin:0 0;">Поставки (закупка)</span>
<span id="t179" class="t" style="left:772.60px;top:568.82px;font-size:13.5px;line-height:16.20px;color:#8e9297;font-weight:normal;transform:scaleX(0.9667);transform-origin:0 0;">Зоны</span>
<span id="t180" class="t" style="left:870.00px;top:568.82px;font-size:13.5px;line-height:16.20px;color:#8e9297;font-weight:normal;transform:scaleX(0.9556);transform-origin:0 0;">Марка</span>
<div class="a" style="left:907.00px;top:537.30px;width:137.00px;height:26.70px;border:3px solid #ef3b3b"></div>
<div class="a" style="left:567.00px;top:588.00px;width:889.00px;height:1.00px;background:#d9dce0"></div>
<div class="a" style="left:738.00px;top:589.00px;width:1.00px;height:258.00px;background:#d6d8db"></div>
<div class="a" style="left:936.00px;top:589.00px;width:1.00px;height:258.00px;background:#d6d8db"></div>
<svg class="a" style="left:0;top:0" width="1488" height="847" viewBox="0 0 1488 847"><path d="M568.2 597.2 L572.2 601.7 L576.2 597.2" stroke="#7f8c95" stroke-width="1.25" fill="none" stroke-linecap="round" stroke-linejoin="round"/><path d="M748.8 597.2 L752.8 601.7 L756.8 597.2" stroke="#7f8c95" stroke-width="1.25" fill="none" stroke-linecap="round" stroke-linejoin="round"/><path d="M947.2 597.2 L951.2 601.7 L955.2 597.2" stroke="#7f8c95" stroke-width="1.25" fill="none" stroke-linecap="round" stroke-linejoin="round"/></svg>
<span id="t181" class="t" style="left:579.70px;top:592.93px;font-size:11.8px;line-height:14.16px;color:#9ba1a7;font-weight:normal;transform:scaleX(0.9560);transform-origin:0 0;">Отмеченные</span>
<span id="t182" class="t" style="left:760.00px;top:592.93px;font-size:11.8px;line-height:14.16px;color:#9ba1a7;font-weight:normal;transform:scaleX(0.9631);transform-origin:0 0;">Загрузки</span>
<span id="t183" class="t" style="left:959.30px;top:592.93px;font-size:11.8px;line-height:14.16px;color:#9ba1a7;font-weight:normal;transform:scaleX(0.9802);transform-origin:0 0;">Ценники</span>
<div class="a" style="left:567.00px;top:615.40px;width:143.00px;height:24.80px;background:#2c3a4c;border-radius:6px"></div>
<div class="a" style="left:567.00px;top:648.40px;width:162.00px;height:24.80px;background:#2c3a4c;border-radius:6px"></div>
<div class="a" style="left:748.00px;top:615.40px;width:180.20px;height:24.80px;background:#2c3a4c;border-radius:6px"></div>
<div class="a" style="left:947.20px;top:615.40px;width:148.00px;height:24.80px;background:#2c3a4c;border-radius:6px"></div>
<div class="a" style="left:947.20px;top:648.40px;width:159.10px;height:24.80px;background:#2c3a4c;border-radius:6px"></div>
<span id="t184" class="t" style="left:580.80px;top:620.12px;font-size:13.5px;line-height:16.20px;color:#fff;font-weight:normal;-webkit-text-stroke:0.25px #fff;transform:scaleX(0.9076);transform-origin:0 0;">Создать список SKU</span>
<span id="t185" class="t" style="left:580.80px;top:653.12px;font-size:13.5px;line-height:16.20px;color:#fff;font-weight:normal;-webkit-text-stroke:0.25px #fff;transform:scaleX(0.9183);transform-origin:0 0;">Добавить в список SKU</span>
<span id="t186" class="t" style="left:760.80px;top:620.12px;font-size:13.5px;line-height:16.20px;color:#fff;font-weight:normal;-webkit-text-stroke:0.25px #fff;transform:scaleX(0.9376);transform-origin:0 0;">Загрузить в оборудование</span>
<span id="t187" class="t" style="left:959.30px;top:620.12px;font-size:13.5px;line-height:16.20px;color:#fff;font-weight:normal;-webkit-text-stroke:0.25px #fff;transform:scaleX(0.9366);transform-origin:0 0;">Распечатать ценники</span>
<span id="t188" class="t" style="left:959.30px;top:653.12px;font-size:13.5px;line-height:16.20px;color:#fff;font-weight:normal;-webkit-text-stroke:0.25px #fff;transform:scaleX(0.9497);transform-origin:0 0;">Перепечатать ценники</span>
<span id="t189" class="t" style="left:580.80px;top:685.32px;font-size:13.5px;line-height:16.20px;color:#2bb394;font-weight:normal;transform:scaleX(0.9171);transform-origin:0 0;">Отметить списки SKU</span>
<div class="a" style="left:938.40px;top:607.80px;width:169.00px;height:37.90px;border:3px solid #ef3b3b"></div>
</body></html>
